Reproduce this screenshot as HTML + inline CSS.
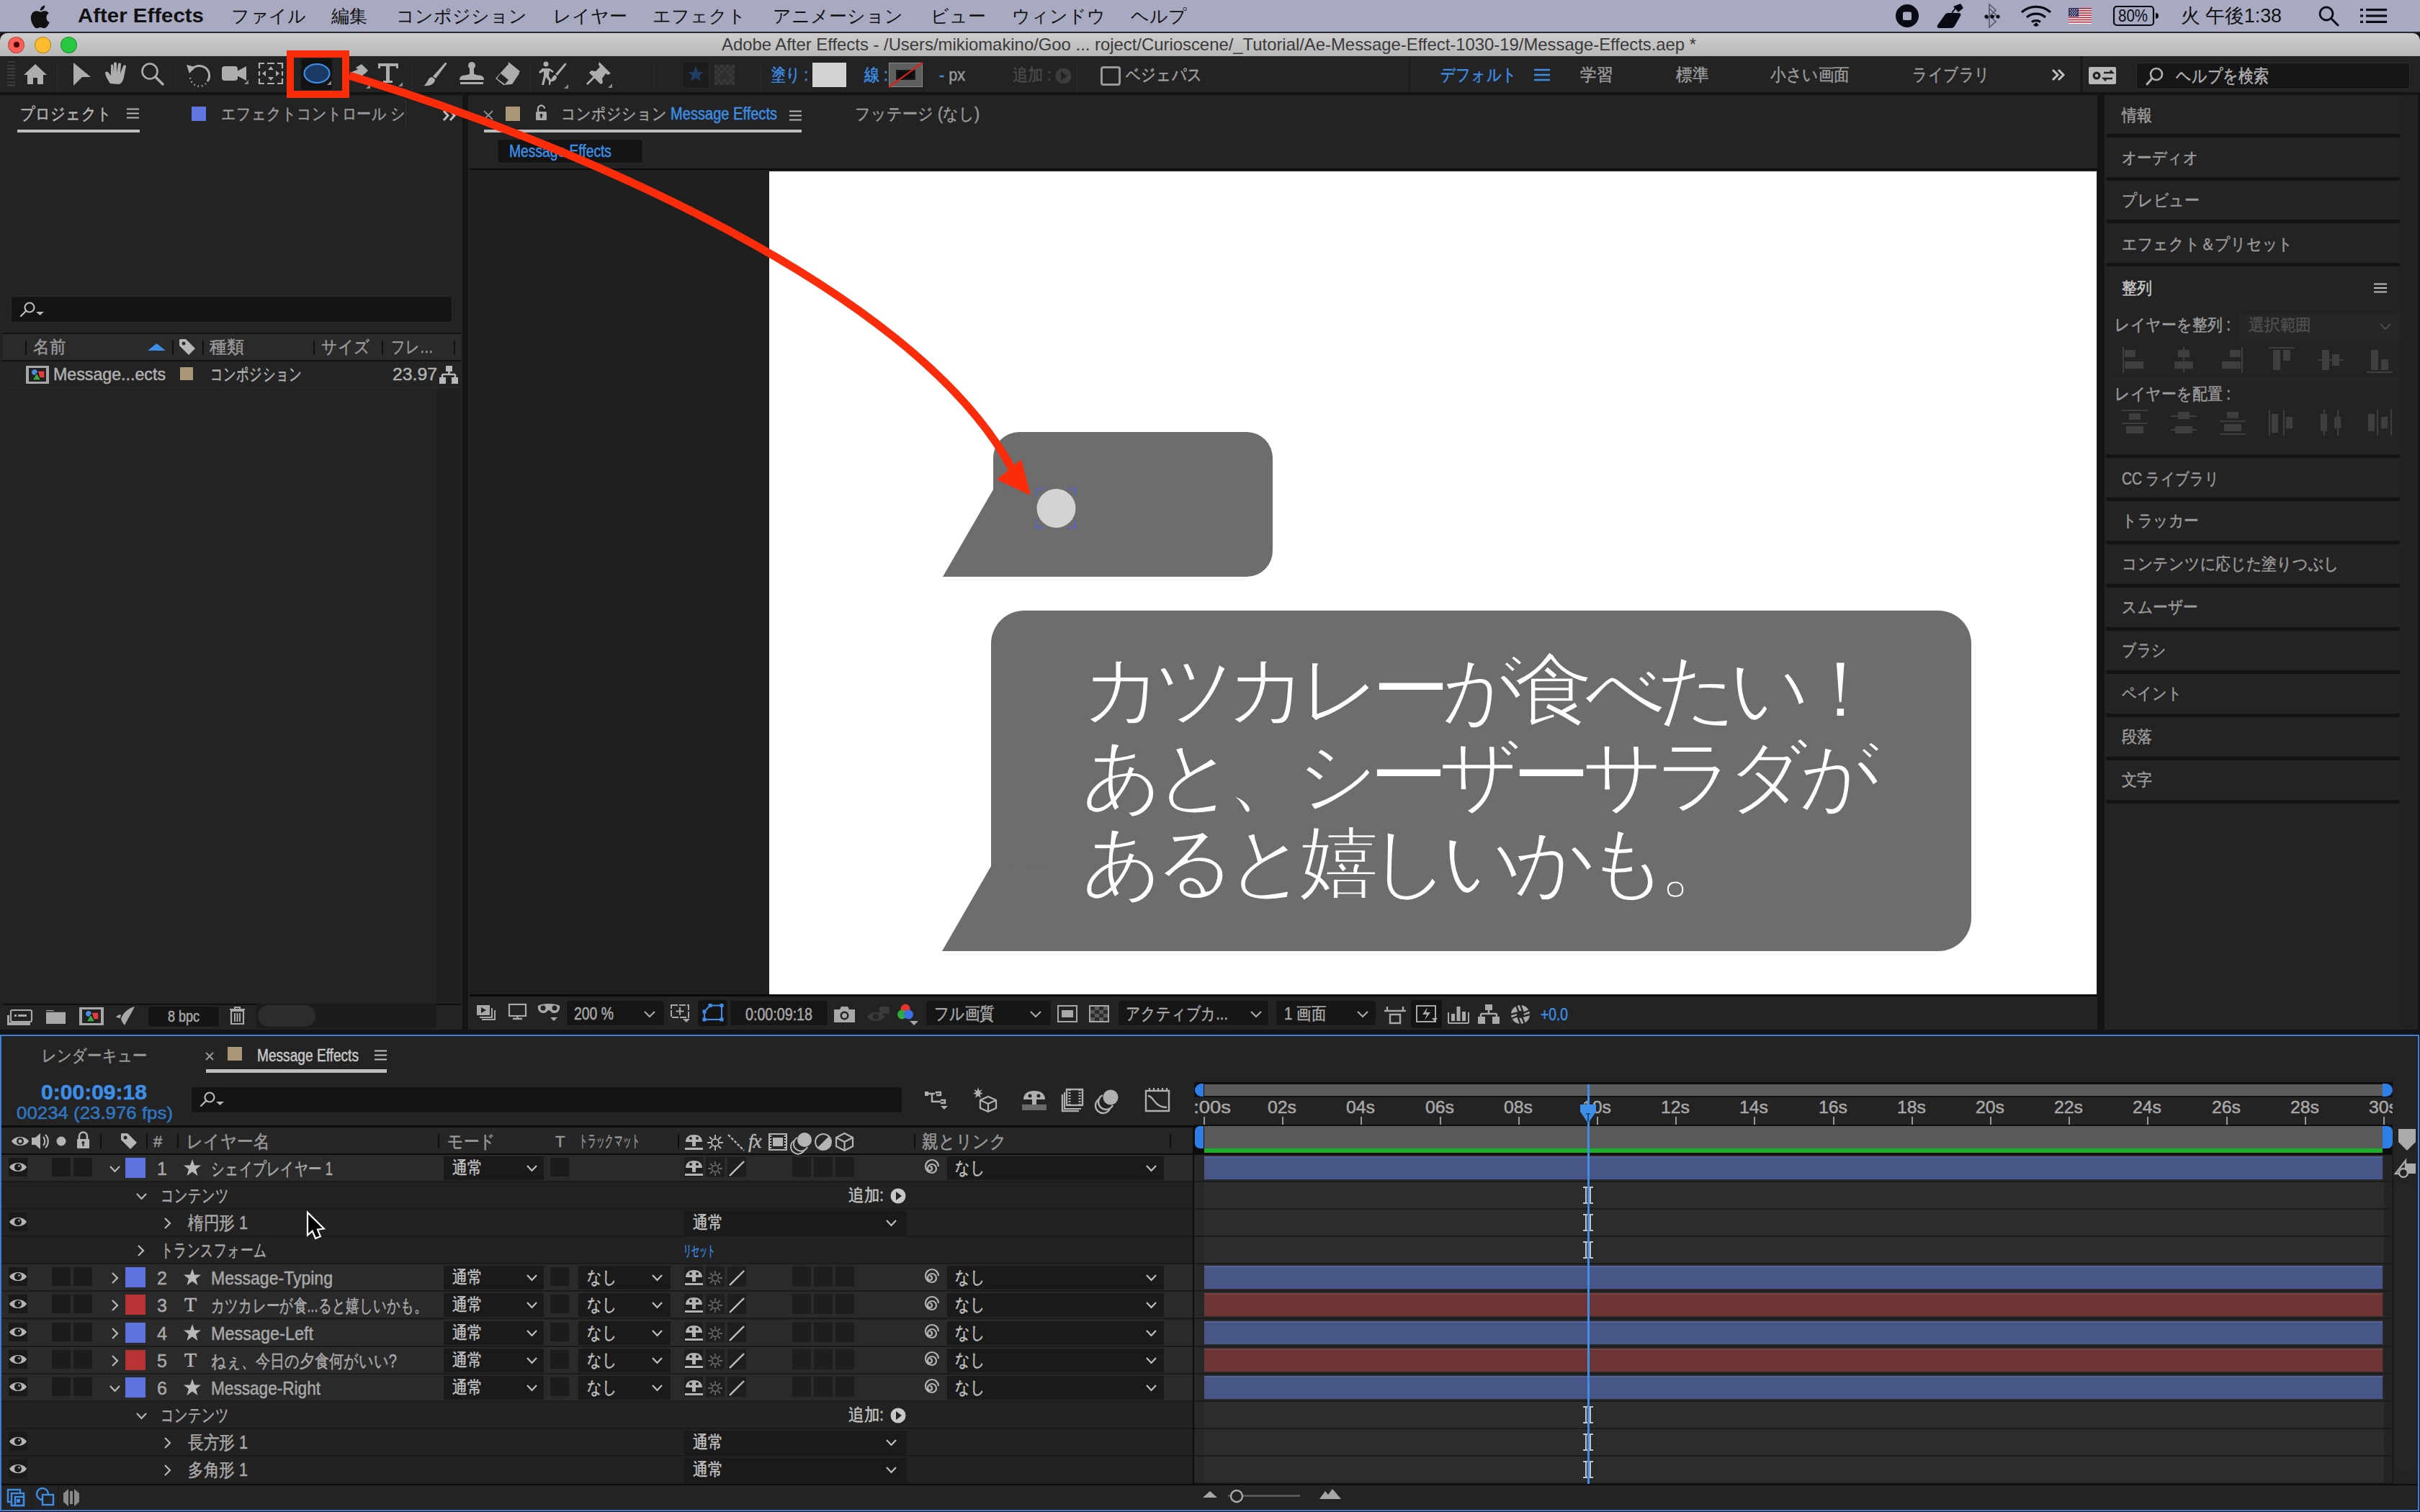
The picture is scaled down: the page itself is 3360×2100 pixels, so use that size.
<!DOCTYPE html><html lang="ja"><head><meta charset="utf-8"><style>
*{margin:0;padding:0;box-sizing:border-box}
html,body{width:3360px;height:2100px;overflow:hidden;background:#141414}
body{position:relative;font-family:"Liberation Sans",sans-serif;color:#a8a8a8}
div{position:absolute}
.t{line-height:40px;height:40px;white-space:nowrap;font-size:24px}
svg{position:absolute;overflow:visible}
.t{font-feature-settings:"palt";-webkit-text-stroke:0.5px currentColor}

.mb{font-size:25px;color:#111;line-height:44px;height:44px;top:0}
.tab{font-size:23px;color:#a0a0a0}
.blue{color:#3d8ee6}
.rp{font-size:23px;color:#9a9a9a}
</style></head><body><div style="left:0px;top:0px;width:3360px;height:44px;background:#a8aac2"></div>
<div style="left:0px;top:44px;width:3360px;height:2px;background:#2a2a2a"></div>
<svg style="left:40px;top:7px" width="30" height="32" viewBox="0 0 30 32"><path d="M24.5 17c0-4 3.3-5.6 3.4-5.7-1.9-2.700-4.800-3.100-5.800-3.100-2.500-.3-4.800 1.400-6.100 1.400s-3.200-1.400-5.200-1.300C8 8.300 5.500 9.900 4.200 12.300c-2.800 4.800-.7 12 2 15.900 1.300 1.900 2.900 4.100 5 4 2-.1 2.800-1.300 5.200-1.300s3.100 1.300 5.200 1.300 3.500-2 4.800-3.900c1.500-2.200 2.100-4.300 2.200-4.400-.1 0-4.100-1.600-4.100-6.200zM20.600 5.400C21.700 4.100 22.500 2.300 22.200.5c-1.600.1-3.500 1.100-4.700 2.400-1 1.200-1.900 3-1.700 4.700 1.800.1 3.600-.9 4.800-2.200z" fill="#111"/></svg>
<div class="mb" style="left:108px;font-weight:bold;font-size:28px;transform:scaleX(1.0511);transform-origin:0 50%">After Effects</div>
<div class="mb" style="left:321px">ファイル</div>
<div class="mb" style="left:460px">編集</div>
<div class="mb" style="left:550px">コンポジション</div>
<div class="mb" style="left:768px">レイヤー</div>
<div class="mb" style="left:906px">エフェクト</div>
<div class="mb" style="left:1073px">アニメーション</div>
<div class="mb" style="left:1292px">ビュー</div>
<div class="mb" style="left:1405px">ウィンドウ</div>
<div class="mb" style="left:1570px">ヘルプ</div>
<div class="mb" style="left:3028px;font-size:27px;transform:scaleX(0.9925);transform-origin:0 50%">火 午後1:38</div>
<div style="left:0px;top:46px;width:3360px;height:32px;background:linear-gradient(#cdcdcd,#b8b8b8);border-radius:10px 10px 0 0"></div>
<div style="left:11px;top:51px;width:23px;height:23px;background:#fc5f57;border-radius:50%;border:1px solid rgba(0,0,0,0.25)"></div>
<div style="left:48px;top:51px;width:23px;height:23px;background:#fdbb2e;border-radius:50%;border:1px solid rgba(0,0,0,0.25)"></div>
<div style="left:84px;top:51px;width:23px;height:23px;background:#27c840;border-radius:50%;border:1px solid rgba(0,0,0,0.25)"></div>
<div style="left:19px;top:58px;width:8px;height:8px;background:#4a0000;border-radius:50%"></div>
<div class="t" style="left:0;width:3360px;text-align:center;top:42px;font-size:24px;color:#3a3a3a;padding-left:0;-webkit-text-stroke:0"><div style="left:1002px;top:0;transform:scaleX(0.9941);transform-origin:0 50%">Adobe After Effects - /Users/mikiomakino/Goo ... roject/Curioscene/_Tutorial/Ae-Message-Effect-1030-19/Message-Effects.aep *</div></div>
<div style="left:0px;top:78px;width:3360px;height:50px;background:#232323"></div>
<div style="left:0px;top:128px;width:3360px;height:4px;background:#141414"></div>
<div style="left:10px;top:85.0px;width:11px;height:2.4px;background:#3a3a3a"></div>
<div style="left:10px;top:89.6px;width:11px;height:2.4px;background:#3a3a3a"></div>
<div style="left:10px;top:94.2px;width:11px;height:2.4px;background:#3a3a3a"></div>
<div style="left:10px;top:98.8px;width:11px;height:2.4px;background:#3a3a3a"></div>
<div style="left:10px;top:103.4px;width:11px;height:2.4px;background:#3a3a3a"></div>
<div style="left:10px;top:108.0px;width:11px;height:2.4px;background:#3a3a3a"></div>
<div style="left:10px;top:112.6px;width:11px;height:2.4px;background:#3a3a3a"></div>
<div style="left:10px;top:117.19999999999999px;width:11px;height:2.4px;background:#3a3a3a"></div>
<div style="left:79px;top:84px;width:1px;height:42px;background:#2b2b2b"></div>
<svg style="left:32px;top:88px;" width="34" height="30" viewBox="0 0 34 30"><path d="M17 1 L33 16 L28 16 L28 29 L20 29 L20 20 L14 20 L14 29 L6 29 L6 16 L1 16 Z" fill="#adadad"/></svg>
<svg style="left:101px;top:86px;" width="26" height="34" viewBox="0 0 26 34"><path d="M1 1 L25 21 L13 21 L1 33 Z" fill="#adadad"/></svg>
<svg style="left:145px;top:86px;" width="34" height="32" viewBox="0 0 34 32"><path d="M8 30 C4 24 1 18 1 15 C2 13 4 13 6 15 L9 19 L9 5 C9 3 12 3 12 5 L12 15 L13 2 C13 0 17 0 17 2 L17 15 L19 3 C19 1 23 1 23 3 L22 16 L26 6 C26 4 30 4 30 6 L27 21 C26 26 24 30 20 31 Z" fill="#adadad"/></svg>
<svg style="left:195px;top:86px;" width="34" height="34" viewBox="0 0 34 34"><circle cx="13" cy="13" r="10.5" fill="none" stroke="#adadad" stroke-width="2.6"/><path d="M21 21 L31 31" stroke="#adadad" stroke-width="3.5" stroke-linecap="round"/></svg>
<div style="left:244px;top:84px;width:1px;height:42px;background:#2b2b2b"></div>
<svg style="left:258px;top:86px;" width="36" height="36" viewBox="0 0 36 36"><path d="M8 11 A13 13 0 1 1 30 27" fill="none" stroke="#adadad" stroke-width="3"/><path d="M1 4 L13 7 L5 16 Z" fill="#adadad"/><path d="M6 22 A13 13 0 0 0 28 30" fill="none" stroke="#adadad" stroke-width="2.5" stroke-dasharray="1.5 4"/></svg>
<svg style="left:307px;top:89px;" width="38" height="28" viewBox="0 0 38 28"><rect x="1" y="3" width="22" height="20" rx="4" fill="#adadad"/><path d="M22 10 L35 3 L35 23 L22 16 Z" fill="#adadad"/><path d="M38 28 L38 22 L32 28Z" fill="#8a8a8a"/></svg>
<svg style="left:359px;top:87px;" width="34" height="30" viewBox="0 0 34 30"><path d="M1 8 V1 H8 M12 1 H22 M26 1 H33 V8 M33 12 V18 M33 22 V29 H26 M22 29 H12 M8 29 H1 V22 M1 18 V12" fill="none" stroke="#adadad" stroke-width="2.2"/><path d="M17 5 L21 10 L13 10Z M17 25 L21 20 L13 20Z M5 15 L10 11 L10 19Z M29 15 L24 11 L24 19Z" fill="#adadad"/></svg>
<div style="left:418px;top:81px;width:43px;height:44px;background:#131313;border-radius:4px"></div>
<svg style="left:420px;top:88px;" width="40" height="32" viewBox="0 0 40 32"><ellipse cx="20" cy="14" rx="17.5" ry="13" fill="#1b3a66" stroke="#3d8ee6" stroke-width="2.2"/><path d="M40 30 L40 24 L34 30Z" fill="#8a8a8a"/></svg>
<svg style="left:476px;top:87px;" width="36" height="36" viewBox="0 0 36 36"><path d="M20 3 L28 -2 L37 7 L32 12 Z" fill="#adadad" transform="translate(-2,4)"/><path d="M10 14 L24 8 L30 14 L22 28 Z" fill="#adadad"/><path d="M38 36 L38 30 L32 36Z" fill="#8a8a8a"/></svg>
<svg style="left:524px;top:87px;" width="34" height="34" viewBox="0 0 34 34"><path d="M1 1 H29 V8 H26 V5 H17 V25 H21 V28 H8 V25 H12 V5 H4 V8 H1 Z" fill="#adadad"/><path d="M35 33 L35 27 L29 33Z" fill="#8a8a8a"/></svg>
<div style="left:572px;top:84px;width:1px;height:42px;background:#2b2b2b"></div>
<svg style="left:587px;top:85px;" width="34" height="36" viewBox="0 0 34 36"><path d="M31 2 C32 1 34 3 33 4 L18 24 L14 21 Z" fill="#adadad"/><path d="M13 22 L17 25 C17 31 11 35 1 34 C5 32 6 28 8 25 C9 23 11 22 13 22Z" fill="#adadad"/></svg>
<svg style="left:637px;top:85px;" width="36" height="34" viewBox="0 0 36 34"><circle cx="18" cy="6" r="5" fill="#adadad"/><path d="M15 9 H21 L21 17 C21 19 27 19 31 20 C34 21 35 23 35 26 H1 C1 23 2 21 5 20 C9 19 15 19 15 17Z" fill="#adadad"/><rect x="2" y="29" width="32" height="3" fill="#adadad"/></svg>
<svg style="left:687px;top:85px;" width="36" height="36" viewBox="0 0 36 36"><path d="M19 1 L35 14 L22 31 L16 31 Z" fill="#adadad"/><path d="M18 5 L34 17 L24 32 L12 33 L1 24 Z" fill="#adadad"/><path d="M8 17 L19 26 L14 32 L3 24Z" fill="#232323"/><path d="M9 20 L17 26 L13 30 L5 24Z" fill="none"/></svg>
<svg style="left:747px;top:85px;" width="42" height="38" viewBox="0 0 42 38"><circle cx="11" cy="4" r="3.5" fill="#adadad"/><path d="M6 10 L16 10 L22 14 L20 16 L16 13 L15 21 L18 26 L17 33 L15 33 L15 27 L11 22 L8 33 L5 33 L8 20 L8 14 L3 17 L1 15Z" fill="#adadad"/><path d="M37 3 C39 2 40 4 39 5 L27 20 L24 18Z" fill="#adadad"/><path d="M23 19 L26 21 C26 26 22 29 15 28 C19 26 19 22 23 19Z" fill="#adadad"/><path d="M42 38 L42 32 L36 38Z" fill="#8a8a8a"/></svg>
<div style="left:736px;top:84px;width:1px;height:42px;background:#2b2b2b"></div>
<svg style="left:813px;top:85px;" width="36" height="38" viewBox="0 0 36 38"><path d="M19 1 L35 17 L31 19 L28 17 L23 24 L24 30 L21 32 L5 16 L8 13 L14 14 L20 8 L18 5 Z" fill="#adadad"/><path d="M11 21 L1 31 L3 33 L13 23Z" fill="#adadad"/><path d="M37 37 L37 31 L31 37Z" fill="#8a8a8a"/></svg>
<div style="left:907px;top:84px;width:1px;height:42px;background:#2b2b2b"></div>
<div style="left:947px;top:85px;width:38px;height:38px;background:#1c1c1c;border:1px solid #2a2a2a;border-radius:3px"></div>
<svg style="left:954px;top:91px;" width="24" height="24" viewBox="0 0 24 24"><path d="M12 1 L15 9 L23 9 L17 14 L19 22 L12 17 L5 22 L7 14 L1 9 L9 9Z" fill="#1f3d63"/></svg>
<svg style="left:991px;top:89px;" width="30" height="30" viewBox="0 0 30 30"><rect x="1" y="1" width="28" height="28" fill="#2e2e2e"/><path d="M1 1h4v4h-4zM9 1h4v4h-4zM17 1h4v4h-4zM25 1h4v4h-4zM5 5h4v4h-4zM13 5h4v4h-4zM21 5h4v4h-4zM1 9h4v4h-4zM9 9h4v4h-4zM17 9h4v4h-4zM25 9h4v4h-4zM5 13h4v4h-4zM21 13h4v4h-4zM1 17h4v4h-4zM25 17h4v4h-4zM5 21h4v4h-4zM13 21h4v4h-4zM21 21h4v4h-4zM1 25h4v4h-4zM9 25h4v4h-4zM17 25h4v4h-4zM25 25h4v4h-4z" fill="#383838"/></svg>
<div style="left:1056px;top:84px;width:1px;height:42px;background:#2b2b2b"></div>
<div class="t blue" style="left:1071px;top:84px;font-size:24px;transform:scaleX(0.8180);transform-origin:0 50%">塗り :</div>
<div style="left:1128px;top:87px;width:47px;height:34px;background:#d3d3d3"></div>
<div class="t blue" style="left:1200px;top:84px;font-size:24px;transform:scaleX(0.8837);transform-origin:0 50%">線 :</div>
<div style="left:1234px;top:87px;width:47px;height:34px;background:#5f5f5f;border:1px solid #8a8a8a"></div>
<div style="left:1244px;top:97px;width:27px;height:14px;background:#0e0e0e;border:2px solid #1a1a1a"></div>
<svg style="left:1234px;top:87px;" width="47" height="34" viewBox="0 0 47 34"><path d="M0 34 L47 0" stroke="#e0211a" stroke-width="2.2"/></svg>
<div class="t blue" style="left:1304px;top:84px;font-size:24px;transform:scaleX(0.8996);transform-origin:0 50%">-<span style="color:#9a9a9a"> px</span></div>
<div class="t" style="left:1406px;top:84px;font-size:24px;color:#4a4a4a;transform:scaleX(0.8803);transform-origin:0 50%">追加 :</div>
<svg style="left:1465px;top:94px;" width="23" height="23" viewBox="0 0 23 23"><circle cx="11.5" cy="11.5" r="11" fill="#3c3c3c"/><path d="M8 5 L17 11.5 L8 18Z" fill="#232323"/></svg>
<div style="left:1495px;top:84px;width:1px;height:42px;background:#2b2b2b"></div>
<div style="left:1528px;top:92px;width:28px;height:27px;border:3px solid #9a9a9a;border-radius:4px"></div>
<div class="t" style="left:1563px;top:84px;font-size:24px;color:#a0a0a0;transform:scaleX(0.8480);transform-origin:0 50%">ベジェパス</div>
<div style="left:1956px;top:82px;width:2px;height:46px;background:#1a1a1a"></div>
<div class="t blue" style="left:2000px;top:84px;font-size:24px;transform:scaleX(0.8480);transform-origin:0 50%">デフォルト</div>
<svg style="left:2130px;top:95px;" width="22" height="18" viewBox="0 0 22 18"><path d="M0 2H22M0 9H22M0 16H22" stroke="#3d8ee6" stroke-width="2.4"/></svg>
<div class="t" style="left:2194px;top:84px;font-size:24px;color:#9a9a9a;transform:scaleX(0.9375);transform-origin:0 50%">学習</div>
<div class="t" style="left:2327px;top:84px;font-size:24px;color:#9a9a9a;transform:scaleX(0.9375);transform-origin:0 50%">標準</div>
<div class="t" style="left:2458px;top:84px;font-size:24px;color:#9a9a9a;transform:scaleX(0.9016);transform-origin:0 50%">小さい画面</div>
<div class="t" style="left:2655px;top:84px;font-size:24px;color:#9a9a9a;transform:scaleX(0.8640);transform-origin:0 50%">ライブラリ</div>
<svg style="left:2848px;top:95px;" width="20" height="18" viewBox="0 0 20 18"><path d="M2 2 L9 9 L2 16 M10 2 L17 9 L10 16" fill="none" stroke="#c0c0c0" stroke-width="3"/></svg>
<div style="left:2888px;top:78px;width:4px;height:50px;background:#1a1a1a"></div>
<svg style="left:2900px;top:93px;" width="38" height="24" viewBox="0 0 38 24"><rect x="0" y="0" width="38" height="24" rx="2" fill="#b8b8b8"/><circle cx="11" cy="12" r="5.5" fill="#232323"/><circle cx="11" cy="12" r="2.2" fill="#b8b8b8"/><path d="M21 8 H33 L30 5 M33 16 H21 L24 19" fill="none" stroke="#232323" stroke-width="2.6"/></svg>
<div style="left:2966px;top:87px;width:380px;height:37px;background:#161616;border:1px solid #2c2c2c;border-radius:4px"></div>
<svg style="left:2979px;top:93px;" width="26" height="26" viewBox="0 0 26 26"><circle cx="15" cy="10" r="8" fill="none" stroke="#b0b0b0" stroke-width="2.6"/><path d="M9 16 L2 24" stroke="#b0b0b0" stroke-width="3" stroke-linecap="round"/></svg>
<div class="t" style="left:3021px;top:85px;font-size:25px;color:#b0b0b0;transform:scaleX(0.8377);transform-origin:0 50%">ヘルプを検索</div>
<div style="left:0px;top:132px;width:642px;height:1298px;background:#232323"></div>
<div style="left:650px;top:132px;width:2262px;height:1298px;background:#232323"></div>
<div style="left:2922px;top:132px;width:411px;height:1298px;background:#232323"></div>
<div style="left:3333px;top:132px;width:24px;height:1298px;background:#212121"></div>
<div class="t tab" style="left:28px;top:138px;color:#b4b4b4;transform:scaleX(0.8819);transform-origin:0 50%">プロジェクト</div>
<svg style="left:176px;top:150px;" width="17" height="15" viewBox="0 0 17 15"><path d="M0 1.5H17M0 7.5H17M0 13.5H17" stroke="#b4b4b4" stroke-width="2.2"/></svg>
<div style="left:24px;top:180px;width:170px;height:4px;background:#bdbdbd"></div>
<div style="left:266px;top:148px;width:20px;height:20px;background:#5f76e0"></div>
<div class="t tab" style="left:307px;top:138px;color:#999;transform:scaleX(0.8726);transform-origin:0 50%">エフェクトコントロール シ</div>
<div style="left:563px;top:140px;width:1px;height:36px;background:#333"></div>
<svg style="left:614px;top:153px;" width="20" height="15" viewBox="0 0 20 15"><path d="M2 1 L8 7.5 L2 14 M11 1 L17 7.5 L11 14" fill="none" stroke="#c0c0c0" stroke-width="3"/></svg>
<div style="left:15px;top:411px;width:613px;height:37px;background:#141414;border:1px solid #2a2a2a;border-radius:4px"></div>
<svg style="left:28px;top:419px;" width="36" height="24" viewBox="0 0 36 24"><circle cx="13" cy="8" r="6.5" fill="none" stroke="#b8b8b8" stroke-width="2.2"/><path d="M8.5 12.5 L1 20" stroke="#b8b8b8" stroke-width="2.4" stroke-linecap="round"/><path d="M22 14 H33 L27.5 19Z" fill="#b8b8b8"/></svg>
<div style="left:4px;top:462px;width:636px;height:2px;background:#111"></div>
<div style="left:4px;top:464px;width:636px;height:36px;background:#2a2a2a"></div>
<div style="left:4px;top:500px;width:636px;height:2px;background:#111"></div>
<div style="left:35px;top:473px;width:2px;height:20px;background:#111"></div>
<div style="left:239px;top:473px;width:2px;height:20px;background:#111"></div>
<div style="left:281px;top:473px;width:2px;height:20px;background:#111"></div>
<div style="left:435px;top:473px;width:2px;height:20px;background:#111"></div>
<div style="left:530px;top:473px;width:2px;height:20px;background:#111"></div>
<div style="left:630px;top:473px;width:2px;height:20px;background:#111"></div>
<div class="t" style="left:46px;top:462px;font-size:24px;color:#999;transform:scaleX(0.9375);transform-origin:0 50%">名前</div>
<svg style="left:205px;top:477px;" width="25" height="10" viewBox="0 0 25 10"><path d="M0 10 L12.5 0 L25 10Z" fill="#3d8ee6"/></svg>
<svg style="left:248px;top:470px;" width="25" height="24" viewBox="0 0 25 24"><path d="M1 2 L1 10 L14 23 L23 14 L10 1 L2 1Z" fill="#b8b8b8"/><circle cx="7" cy="7" r="2.5" fill="#2a2a2a"/></svg>
<div class="t" style="left:291px;top:462px;font-size:24px;color:#999;transform:scaleX(1.0000);transform-origin:0 50%">種類</div>
<div class="t" style="left:446px;top:462px;font-size:24px;color:#999;transform:scaleX(0.9067);transform-origin:0 50%">サイズ</div>
<div class="t" style="left:543px;top:462px;font-size:24px;color:#999;transform:scaleX(0.7973);transform-origin:0 50%">フレ…</div>
<div style="left:4px;top:538px;width:636px;height:1px;background:#2b2b2b"></div>
<svg style="left:36px;top:508px;" width="32" height="25" viewBox="0 0 32 25"><rect x="0" y="0" width="32" height="25" fill="#a8a8a8"/><rect x="4" y="3" width="24" height="19" fill="#222"/><circle cx="12" cy="9" r="4.5" fill="#4a8fe0" stroke="#111"/><path d="M9 20 L15 10 L21 20Z" fill="#3aa648" stroke="#111"/><path d="M16 7 H26 V17 H19Z" fill="#e23b3b" stroke="#111"/></svg>
<div class="t" style="left:74px;top:500px;font-size:24px;color:#b0b0b0;transform:scaleX(0.9665);transform-origin:0 50%">Message...ects</div>
<div style="left:250px;top:510px;width:18px;height:18px;background:#a89676"></div>
<div class="t" style="left:292px;top:500px;font-size:24px;color:#b0b0b0;transform:scaleX(0.7257);transform-origin:0 50%">コンポジション</div>
<div class="t" style="left:545px;top:500px;font-size:24px;color:#b0b0b0;transform:scaleX(1.0323);transform-origin:0 50%">23.97</div>
<svg style="left:610px;top:508px;" width="26" height="25" viewBox="0 0 26 25"><rect x="9" y="0" width="9" height="8" fill="#b8b8b8"/><path d="M13.5 8 V12 M4 12 H22 M4 12 V16 M22 12 V16" stroke="#b8b8b8" stroke-width="2.5" fill="none"/><rect x="0" y="16" width="9" height="9" fill="#b8b8b8"/><rect x="17" y="16" width="9" height="9" fill="#b8b8b8"/></svg>
<div style="left:606px;top:539px;width:34px;height:855px;background:#202020"></div>
<div style="left:4px;top:1394px;width:636px;height:2px;background:#0f0f0f"></div>
<div style="left:356px;top:1394px;width:250px;height:34px;background:#1c1c1c"></div>
<svg style="left:10px;top:1401px;" width="34" height="23" viewBox="0 0 34 23"><path d="M0 9 H3 V23 H0Z M0 9 H9 M7 9 V23" fill="#a8a8a8"/><rect x="5" y="2" width="29" height="16" rx="2" fill="none" stroke="#a8a8a8" stroke-width="2.2"/><rect x="10" y="8" width="3" height="3" fill="#a8a8a8"/><rect x="15" y="8" width="12" height="3" fill="#a8a8a8"/><rect x="3" y="19" width="29" height="4" fill="#a8a8a8"/></svg>
<svg style="left:64px;top:1400px;" width="27" height="23" viewBox="0 0 27 23"><path d="M0 3 H10 L12 5 H27 V22 H0Z" fill="#a8a8a8"/><path d="M0 5 H27" stroke="#232323" stroke-width="1.5"/></svg>
<svg style="left:110px;top:1399px;" width="34" height="25" viewBox="0 0 34 25"><rect x="0" y="0" width="34" height="25" fill="#a8a8a8"/><rect x="4" y="3" width="26" height="19" fill="#232323"/><circle cx="13" cy="9" r="4.5" fill="#4a8fe0" stroke="#111"/><path d="M10 20 L16 10 L22 20Z" fill="#3aa648" stroke="#111"/><path d="M17 7 H27 V17 H20Z" fill="#e23b3b" stroke="#111"/></svg>
<svg style="left:161px;top:1398px;" width="27" height="26" viewBox="0 0 27 26"><path d="M26 0 C18 2 10 8 7 17 C8 21 10 24 12 26 C16 18 21 10 26 0Z M7 11 C4 11 1 13 0 15 L6 16Z" fill="#a8a8a8"/></svg>
<div style="left:205px;top:1397px;width:100px;height:30px;background:#151515;border:1px solid #2a2a2a;border-radius:4px"></div>
<div class="t" style="left:233px;top:1392px;font-size:22px;color:#a8a8a8;transform:scaleX(0.8174);transform-origin:0 50%">8 bpc</div>
<svg style="left:319px;top:1398px;" width="21" height="25" viewBox="0 0 21 25"><path d="M0 4 H21 M7 4 V1 H14 V4" fill="none" stroke="#a8a8a8" stroke-width="2"/><path d="M2 6 H19 V24 H2Z" fill="none" stroke="#a8a8a8" stroke-width="2.2"/><path d="M7 9 V21 M10.5 9 V21 M14 9 V21" stroke="#a8a8a8" stroke-width="2"/></svg>
<div style="left:358px;top:1396px;width:80px;height:30px;background:#2c2c2c;border-radius:15px"></div>
<svg style="left:671px;top:153px;" width="14" height="14" viewBox="0 0 14 14"><path d="M1 1 L13 13 M13 1 L1 13" stroke="#8a8a8a" stroke-width="2"/></svg>
<div style="left:702px;top:148px;width:20px;height:20px;background:#a89676"></div>
<svg style="left:743px;top:145px;" width="17" height="23" viewBox="0 0 17 23"><path d="M4 10 V6 A4.5 4.5 0 0 1 13 6" fill="none" stroke="#a8a8a8" stroke-width="2.4"/><rect x="1" y="10" width="15" height="12" rx="1.5" fill="#a8a8a8"/><circle cx="8.5" cy="15" r="2" fill="#232323"/><rect x="7.5" y="15" width="2" height="4" fill="#232323"/></svg>
<div class="t tab" style="left:779px;top:138px;transform:scaleX(0.8721);transform-origin:0 50%">コンポジション <span class="blue">Message Effects</span></div>
<svg style="left:1096px;top:153px;" width="17" height="15" viewBox="0 0 17 15"><path d="M0 1.5H17M0 7.5H17M0 13.5H17" stroke="#b4b4b4" stroke-width="2.2"/></svg>
<div style="left:672px;top:180px;width:441px;height:4px;background:#bdbdbd"></div>
<div class="t tab" style="left:1187px;top:138px;color:#999;transform:scaleX(0.9167);transform-origin:0 50%">フッテージ (なし)</div>
<div style="left:690px;top:193px;width:203px;height:34px;background:#141414;border:1px solid #2a2a2a;border-radius:4px"></div>
<div class="t blue" style="left:707px;top:190px;font-size:23px;transform:scaleX(0.8372);transform-origin:0 50%">Message Effects</div>
<div style="left:652px;top:234px;width:2260px;height:2px;background:#0a0a0a"></div>
<div style="left:652px;top:236px;width:2260px;height:1145px;background:#1f1f1f"></div>
<div style="left:1068px;top:238px;width:1843px;height:1143px;background:#ffffff"></div>
<div style="left:652px;top:1381px;width:2260px;height:3px;background:#0a0a0a"></div>
<svg style="left:662px;top:1396px;" width="27" height="21" viewBox="0 0 27 21"><rect x="0" y="0" width="18" height="14" fill="#a8a8a8"/><path d="M6 3 L13 7 L6 11Z" fill="#232323"/><path d="M21 4 V17 H4 M25 7 V20 H7" fill="none" stroke="#a8a8a8" stroke-width="2"/></svg>
<svg style="left:706px;top:1394px;" width="25" height="22" viewBox="0 0 25 22"><rect x="1" y="1" width="23" height="16" fill="none" stroke="#a8a8a8" stroke-width="2.2"/><path d="M12.5 17 V20 M6 21 H19" stroke="#a8a8a8" stroke-width="2.5"/></svg>
<svg style="left:745px;top:1393px;" width="34" height="30" viewBox="0 0 34 30"><path d="M2 4 C8 0 26 0 32 4 C33 9 30 14 24 14 C20 14 19 10 17 10 C15 10 14 14 10 14 C4 14 1 9 2 4Z" fill="#a8a8a8"/><circle cx="9" cy="7" r="3.5" fill="#232323"/><circle cx="25" cy="7" r="3.5" fill="#232323"/><path d="M19 20 H29 L24 25Z" fill="#a8a8a8"/></svg>
<div style="left:786px;top:1389px;width:137px;height:36px;background:#161616;border:1px solid #262626;border-radius:4px"></div>
<div class="t" style="left:797px;top:1388px;font-size:23px;color:#a8a8a8;transform:scaleX(0.8433);transform-origin:0 50%">200 %</div>
<svg style="left:894px;top:1404px;" width="16" height="10" viewBox="0 0 16 10"><path d="M1 1 L8 8 L15 1" fill="none" stroke="#a8a8a8" stroke-width="2.2"/></svg>
<svg style="left:929px;top:1393px;" width="32" height="30" viewBox="0 0 32 30"><rect x="3" y="3" width="24" height="17" fill="none" stroke="#a8a8a8" stroke-width="2" stroke-dasharray="9 2"/><path d="M15 6 V17 M9.5 11.5 H20.5" stroke="#a8a8a8" stroke-width="2"/><path d="M19 22 H29 L24 27Z" fill="#a8a8a8"/></svg>
<div style="left:969px;top:1389px;width:41px;height:36px;background:#141414;border-radius:4px"></div>
<svg style="left:975px;top:1394px;" width="30" height="25" viewBox="0 0 30 25"><path d="M11 2.5 H27 V22 H3 V11Z" fill="none" stroke="#3d8ee6" stroke-width="2"/><rect x="8.5" y="0" width="5" height="5" fill="#3d8ee6"/><rect x="24.5" y="0" width="5" height="5" fill="#3d8ee6"/><rect x="0.5" y="8.5" width="5" height="5" fill="#3d8ee6"/><rect x="0.5" y="19.5" width="5" height="5" fill="#3d8ee6"/><rect x="24.5" y="19.5" width="5" height="5" fill="#3d8ee6"/></svg>
<div style="left:1013px;top:1389px;width:137px;height:36px;background:#161616;border:1px solid #262626;border-radius:4px"></div>
<div class="t" style="left:1035px;top:1389px;font-size:23px;color:#a8a8a8;transform:scaleX(0.8554);transform-origin:0 50%">0:00:09:18</div>
<svg style="left:1158px;top:1397px;" width="29" height="23" viewBox="0 0 29 23"><path d="M0 5 H8 L10 1 H19 L21 5 H29 V23 H0Z" fill="#a8a8a8"/><circle cx="14.5" cy="13.5" r="6" fill="#232323"/><circle cx="14.5" cy="13.5" r="3.5" fill="#a8a8a8"/></svg>
<svg style="left:1203px;top:1396px;" width="32" height="26" viewBox="0 0 32 26"><path d="M1 16 C6 8 20 8 26 16 C20 24 6 24 1 16Z" fill="#3a3a3a"/><circle cx="13" cy="16" r="4" fill="#232323"/><rect x="18" y="2" width="14" height="10" rx="2" fill="#3a3a3a"/></svg>
<svg style="left:1247px;top:1393px;" width="32" height="36" viewBox="0 0 32 36"><circle cx="10" cy="8" r="6.5" fill="#e8322d"/><circle cx="5.5" cy="16" r="6.5" fill="#2faa3c"/><circle cx="14.5" cy="16" r="6.5" fill="#3c6ee8"/><path d="M16 25 H28 L22 31Z" fill="#a8a8a8"/></svg>
<div style="left:1285px;top:1389px;width:175px;height:36px;background:#161616;border:1px solid #262626;border-radius:4px"></div>
<div class="t" style="left:1297px;top:1388px;font-size:24px;color:#a8a8a8;transform:scaleX(0.8571);transform-origin:0 50%">フル画質</div>
<svg style="left:1430px;top:1404px;" width="16" height="10" viewBox="0 0 16 10"><path d="M1 1 L8 8 L15 1" fill="none" stroke="#a8a8a8" stroke-width="2.2"/></svg>
<svg style="left:1468px;top:1396px;" width="28" height="24" viewBox="0 0 28 24"><rect x="1" y="1" width="26" height="22" fill="none" stroke="#a8a8a8" stroke-width="2"/><rect x="6" y="7" width="16" height="10" fill="#a8a8a8"/></svg>
<svg style="left:1512px;top:1396px;" width="28" height="24" viewBox="0 0 28 24"><rect x="1" y="1" width="26" height="22" fill="#5a5a5a" stroke="#a8a8a8" stroke-width="2"/><path d="M2 2h6v5h-6zM14 2h6v5h-6zM8 7h6v5h-6zM20 7h6v5h-6zM2 12h6v5h-6zM14 12h6v5h-6zM8 17h6v5h-6zM20 17h6v5h-6z" fill="#2b2b2b"/></svg>
<div style="left:1552px;top:1389px;width:210px;height:36px;background:#161616;border:1px solid #262626;border-radius:4px"></div>
<div class="t" style="left:1563px;top:1388px;font-size:24px;color:#a8a8a8;transform:scaleX(0.8352);transform-origin:0 50%">アクティブカ...</div>
<svg style="left:1736px;top:1404px;" width="16" height="10" viewBox="0 0 16 10"><path d="M1 1 L8 8 L15 1" fill="none" stroke="#a8a8a8" stroke-width="2.2"/></svg>
<div style="left:1771px;top:1389px;width:140px;height:36px;background:#161616;border:1px solid #262626;border-radius:4px"></div>
<div class="t" style="left:1783px;top:1388px;font-size:24px;color:#a8a8a8;transform:scaleX(0.8527);transform-origin:0 50%">1 画面</div>
<svg style="left:1884px;top:1404px;" width="16" height="10" viewBox="0 0 16 10"><path d="M1 1 L8 8 L15 1" fill="none" stroke="#a8a8a8" stroke-width="2.2"/></svg>
<svg style="left:1921px;top:1396px;" width="32" height="28" viewBox="0 0 32 28"><path d="M1 8 H31 M5 8 V2 M27 8 V2 M9 13 H23 V25 H9Z" fill="none" stroke="#a8a8a8" stroke-width="2.4"/></svg>
<div style="left:1959px;top:1389px;width:43px;height:39px;background:#141414;border-radius:4px"></div>
<svg style="left:1966px;top:1396px;" width="30" height="26" viewBox="0 0 30 26"><rect x="1" y="1" width="26" height="22" fill="none" stroke="#a8a8a8" stroke-width="2"/><path d="M16 3 L9 13 H15 L12 21 L20 10 H14Z" fill="#a8a8a8"/><path d="M22 18 H30 L26 23Z" fill="#a8a8a8"/></svg>
<svg style="left:2010px;top:1396px;" width="30" height="26" viewBox="0 0 30 26"><path d="M1 25 H29 M1 10 V25 M29 10 V25" stroke="#a8a8a8" stroke-width="2" fill="none"/><rect x="5" y="12" width="5" height="10" fill="#a8a8a8"/><rect x="12.5" y="2" width="5" height="20" fill="#a8a8a8"/><rect x="20" y="9" width="5" height="13" fill="#a8a8a8"/></svg>
<svg style="left:2052px;top:1395px;" width="30" height="28" viewBox="0 0 30 28"><rect x="10" y="0" width="10" height="8" fill="#a8a8a8"/><path d="M15 8 V13 M4 13 H26 M4 13 V17 M26 13 V17" stroke="#a8a8a8" stroke-width="2.5" fill="none"/><rect x="0" y="17" width="10" height="10" fill="#a8a8a8"/><rect x="20" y="17" width="10" height="10" fill="#a8a8a8"/></svg>
<div style="left:2098px;top:1390px;width:1px;height:37px;background:#2e2e2e"></div>
<svg style="left:2096px;top:1394px;" width="30" height="30" viewBox="0 0 30 30"><circle cx="15" cy="15" r="13" fill="#a8a8a8"/><path d="M15 2 L19 13 L28 9 M28 15 L17 18 L21 28 M15 28 L11 17 L2 21 M2 15 L13 12 L9 2" fill="none" stroke="#232323" stroke-width="2.4"/><circle cx="15" cy="15" r="5" fill="#232323"/></svg>
<div class="t blue" style="left:2139px;top:1389px;font-size:23px;transform:scaleX(0.8369);transform-origin:0 50%">+0.0</div>
<div style="left:2912px;top:132px;width:10px;height:1298px;background:#141414"></div>
<div style="left:2924px;top:186px;width:408px;height:5px;background:#141414"></div>
<div style="left:2924px;top:246px;width:408px;height:5px;background:#141414"></div>
<div style="left:2924px;top:305px;width:408px;height:5px;background:#141414"></div>
<div style="left:2924px;top:365px;width:408px;height:5px;background:#141414"></div>
<div style="left:2924px;top:631px;width:408px;height:5px;background:#141414"></div>
<div style="left:2924px;top:691px;width:408px;height:5px;background:#141414"></div>
<div style="left:2924px;top:751px;width:408px;height:5px;background:#141414"></div>
<div style="left:2924px;top:811px;width:408px;height:5px;background:#141414"></div>
<div style="left:2924px;top:871px;width:408px;height:5px;background:#141414"></div>
<div style="left:2924px;top:931px;width:408px;height:5px;background:#141414"></div>
<div style="left:2924px;top:991px;width:408px;height:5px;background:#141414"></div>
<div style="left:2924px;top:1051px;width:408px;height:5px;background:#141414"></div>
<div style="left:2924px;top:1111px;width:408px;height:5px;background:#141414"></div>
<div class="t rp" style="left:2946px;top:140px;transform:scaleX(0.9130);transform-origin:0 50%">情報</div>
<div class="t rp" style="left:2946px;top:199px;transform:scaleX(0.8908);transform-origin:0 50%">オーディオ</div>
<div class="t rp" style="left:2946px;top:258px;transform:scaleX(0.9076);transform-origin:0 50%">プレビュー</div>
<div class="t rp" style="left:2946px;top:319px;transform:scaleX(0.9049);transform-origin:0 50%">エフェクト＆プリセット</div>
<div class="t rp" style="left:2946px;top:645px;transform:scaleX(0.8457);transform-origin:0 50%">CC ライブラリ</div>
<div class="t rp" style="left:2946px;top:703px;transform:scaleX(0.8992);transform-origin:0 50%">トラッカー</div>
<div class="t rp" style="left:2946px;top:763px;transform:scaleX(0.9042);transform-origin:0 50%">コンテンツに応じた塗りつぶし</div>
<div class="t rp" style="left:2946px;top:823px;transform:scaleX(0.8983);transform-origin:0 50%">スムーザー</div>
<div class="t rp" style="left:2946px;top:883px;transform:scaleX(0.8611);transform-origin:0 50%">ブラシ</div>
<div class="t rp" style="left:2946px;top:943px;transform:scaleX(0.8750);transform-origin:0 50%">ペイント</div>
<div class="t rp" style="left:2946px;top:1003px;transform:scaleX(0.9130);transform-origin:0 50%">段落</div>
<div class="t rp" style="left:2946px;top:1063px;transform:scaleX(0.9130);transform-origin:0 50%">文字</div>
<div class="t rp" style="left:2946px;top:380px;color:#c8c8c8;transform:scaleX(0.9130);transform-origin:0 50%">整列</div>
<svg style="left:3296px;top:393px;" width="18" height="14" viewBox="0 0 18 14"><path d="M0 1.5H18M0 7H18M0 12.5H18" stroke="#c0c0c0" stroke-width="2"/></svg>
<div class="t rp" style="left:2936px;top:431px;transform:scaleX(0.9056);transform-origin:0 50%">レイヤーを整列 :</div>
<div style="left:3108px;top:435px;width:224px;height:37px;background:#262626"></div>
<div class="t rp" style="left:3122px;top:431px;color:#4e4e4e;transform:scaleX(0.9457);transform-origin:0 50%">選択範囲</div>
<svg style="left:3304px;top:449px;" width="16" height="10" viewBox="0 0 16 10"><path d="M1 1 L8 8 L15 1" fill="none" stroke="#4a4a4a" stroke-width="2"/></svg>
<svg style="left:2946px;top:482px;" width="36" height="36" viewBox="0 0 36 36"><rect x="1" y="0" width="2" height="36" fill="#3e3e3e"/><rect x="4" y="4" width="15" height="10" fill="#3e3e3e"/><rect x="4" y="20" width="26" height="10" fill="#3e3e3e"/></svg>
<svg style="left:3014px;top:482px;" width="36" height="36" viewBox="0 0 36 36"><rect x="17" y="0" width="2" height="36" fill="#3e3e3e"/><rect x="10" y="4" width="16" height="10" fill="#3e3e3e"/><rect x="5" y="20" width="26" height="10" fill="#3e3e3e"/></svg>
<svg style="left:3082px;top:482px;" width="36" height="36" viewBox="0 0 36 36"><rect x="30" y="0" width="2" height="36" fill="#3e3e3e"/><rect x="14" y="4" width="15" height="10" fill="#3e3e3e"/><rect x="3" y="20" width="26" height="10" fill="#3e3e3e"/></svg>
<svg style="left:3150px;top:482px;" width="36" height="36" viewBox="0 0 36 36"><rect x="0" y="0" width="36" height="2" fill="#3e3e3e"/><rect x="6" y="4" width="10" height="28" fill="#3e3e3e"/><rect x="20" y="4" width="10" height="15" fill="#3e3e3e"/></svg>
<svg style="left:3218px;top:482px;" width="36" height="36" viewBox="0 0 36 36"><rect x="0" y="17" width="36" height="2" fill="#3e3e3e"/><rect x="6" y="4" width="10" height="28" fill="#3e3e3e"/><rect x="20" y="10" width="10" height="16" fill="#3e3e3e"/></svg>
<svg style="left:3286px;top:482px;" width="36" height="36" viewBox="0 0 36 36"><rect x="0" y="34" width="36" height="2" fill="#3e3e3e"/><rect x="6" y="4" width="10" height="28" fill="#3e3e3e"/><rect x="20" y="17" width="10" height="15" fill="#3e3e3e"/></svg>
<div style="left:2934px;top:526px;width:396px;height:2px;background:#262626"></div>
<div class="t rp" style="left:2936px;top:527px;transform:scaleX(0.9056);transform-origin:0 50%">レイヤーを配置 :</div>
<svg style="left:2946px;top:569px;" width="36" height="36" viewBox="0 0 36 36"><rect x="0" y="0" width="36" height="2" fill="#3e3e3e"/><rect x="0" y="18" width="36" height="2" fill="#3e3e3e"/><rect x="10" y="5" width="16" height="9" fill="#3e3e3e"/><rect x="6" y="23" width="24" height="10" fill="#3e3e3e"/></svg>
<svg style="left:3014px;top:569px;" width="36" height="36" viewBox="0 0 36 36"><rect x="0" y="8" width="36" height="2" fill="#3e3e3e"/><rect x="0" y="27" width="36" height="2" fill="#3e3e3e"/><rect x="10" y="3" width="16" height="10" fill="#3e3e3e"/><rect x="6" y="23" width="24" height="10" fill="#3e3e3e"/></svg>
<svg style="left:3082px;top:569px;" width="36" height="36" viewBox="0 0 36 36"><rect x="0" y="15" width="36" height="2" fill="#3e3e3e"/><rect x="0" y="33" width="36" height="2" fill="#3e3e3e"/><rect x="10" y="3" width="16" height="9" fill="#3e3e3e"/><rect x="6" y="20" width="24" height="10" fill="#3e3e3e"/></svg>
<svg style="left:3150px;top:569px;" width="36" height="36" viewBox="0 0 36 36"><rect x="0" y="0" width="2" height="36" fill="#3e3e3e"/><rect x="20" y="0" width="2" height="36" fill="#3e3e3e"/><rect x="4" y="6" width="9" height="26" fill="#3e3e3e"/><rect x="24" y="10" width="9" height="16" fill="#3e3e3e"/></svg>
<svg style="left:3218px;top:569px;" width="36" height="36" viewBox="0 0 36 36"><rect x="8" y="0" width="2" height="36" fill="#3e3e3e"/><rect x="27" y="0" width="2" height="36" fill="#3e3e3e"/><rect x="4" y="6" width="9" height="24" fill="#3e3e3e"/><rect x="23" y="10" width="9" height="16" fill="#3e3e3e"/></svg>
<svg style="left:3286px;top:569px;" width="36" height="36" viewBox="0 0 36 36"><rect x="14" y="0" width="2" height="36" fill="#3e3e3e"/><rect x="33" y="0" width="2" height="36" fill="#3e3e3e"/><rect x="2" y="6" width="9" height="24" fill="#3e3e3e"/><rect x="20" y="10" width="9" height="16" fill="#3e3e3e"/></svg>
<svg style="left:0;top:0" width="3360" height="2100" viewBox="0 0 3360 2100">
<rect x="1379" y="600" width="388" height="201" rx="36" fill="#6d6d6d"/>
<path d="M1379 680 L1309 801 L1450 801 L1450 690Z" fill="#6d6d6d"/>
<rect x="1376" y="848" width="1361" height="473" rx="46" fill="#6d6d6d"/>
<path d="M1376 1203 L1308 1321 L1460 1321 L1460 1200Z" fill="#6d6d6d"/>
<circle cx="1466.5" cy="706" r="27" fill="#d3d3d3"/>
<path d="M1439 689 V679 H1449 M1483 679 H1493 V689 M1493 723 V733 H1483 M1449 733 H1439 V723" fill="none" stroke="#5a67b0" stroke-width="2.5"/>
</svg>
<div style="left:1502px;top:897px;font-size:110px;letter-spacing:-12.5px;line-height:120px;color:#ffffff;white-space:nowrap;-webkit-text-stroke:2px #6d6d6d">カツカレーが食べたい！<br>あと、シーザーサラダが<br>あると嬉しいかも。</div>
<div style="left:0px;top:1437px;width:3359px;height:662px;background:#232323;border:2px solid #3b7fd8"></div>
<div class="t tab" style="left:58px;top:1446px;color:#999;transform:scaleX(0.8795);transform-origin:0 50%">レンダーキュー</div>
<svg style="left:285px;top:1461px;" width="12" height="12" viewBox="0 0 12 12"><path d="M1 1 L11 11 M11 1 L1 11" stroke="#999" stroke-width="2"/></svg>
<div style="left:316px;top:1454px;width:20px;height:19px;background:#a89676"></div>
<div class="t tab" style="left:357px;top:1446px;color:#c8c8c8;transform:scaleX(0.8313);transform-origin:0 50%">Message Effects</div>
<svg style="left:520px;top:1458px;" width="17" height="15" viewBox="0 0 17 15"><path d="M0 1.5H17M0 7.5H17M0 13.5H17" stroke="#c0c0c0" stroke-width="2.2"/></svg>
<div style="left:286px;top:1485px;width:251px;height:5px;background:#bdbdbd"></div>
<div class="t" style="left:57px;top:1497px;font-size:29px;font-weight:bold;color:#3d8ee6;transform:scaleX(1.0361);transform-origin:0 50%">0:00:09:18</div>
<div class="t" style="left:23px;top:1526px;font-size:24px;color:#2f78c4;transform:scaleX(1.0770);transform-origin:0 50%">00234 (23.976 fps)</div>
<div style="left:265px;top:1509px;width:988px;height:37px;background:#141414;border:1px solid #262626;border-radius:4px"></div>
<svg style="left:278px;top:1516px;" width="36" height="24" viewBox="0 0 36 24"><circle cx="13" cy="8" r="6.5" fill="none" stroke="#b8b8b8" stroke-width="2.2"/><path d="M8.5 12.5 L1 20" stroke="#b8b8b8" stroke-width="2.4" stroke-linecap="round"/><path d="M22 14 H33 L27.5 19Z" fill="#b8b8b8"/></svg>
<svg style="left:1284px;top:1512px;" width="36" height="32" viewBox="0 0 36 32"><path d="M1 7 H14 M10 7 V18 H22 M16 7 V5 H22 V9 H16 M22 16 H28 V20 H22" fill="none" stroke="#b0b0b0" stroke-width="2.4"/><rect x="0" y="4" width="5" height="6" fill="#b0b0b0"/><path d="M22 24 H32 L27 29Z" fill="#b0b0b0"/></svg>
<svg style="left:1350px;top:1510px;" width="36" height="34" viewBox="0 0 36 34"><path d="M8 0 L9.5 5 L14 3 L11 7 L15 9 L10.5 10 L12 15 L8 12 L4 15 L5.5 10 L1 9 L5 7 L2 3 L6.5 5Z" fill="#b0b0b0"/><path d="M22 13 L33 18 V29 L22 34 L11 29 V18Z M11 18 L22 23 L33 18 M22 23 V34" fill="none" stroke="#b0b0b0" stroke-width="2.3"/></svg>
<svg style="left:1419px;top:1514px;" width="34" height="28" viewBox="0 0 34 28"><path d="M2 13 C2 5 8 1 17 1 C26 1 32 5 32 13Z" fill="#b0b0b0"/><circle cx="11" cy="8" r="2.5" fill="#232323"/><circle cx="23" cy="8" r="2.5" fill="#232323"/><rect x="14" y="13" width="6" height="8" fill="#b0b0b0"/><rect x="0" y="20" width="34" height="8" fill="#6a6a6a"/></svg>
<svg style="left:1474px;top:1512px;" width="30" height="32" viewBox="0 0 30 32"><rect x="7" y="1" width="22" height="22" fill="none" stroke="#b0b0b0" stroke-width="2.4"/><path d="M1 8 V31 H24" fill="none" stroke="#b0b0b0" stroke-width="2.4"/><path d="M4 5 V28 H27" fill="none" stroke="#b0b0b0" stroke-width="2"/><path d="M11 1 V23 M25 1 V23" stroke="#b0b0b0" stroke-width="3" stroke-dasharray="2 2"/></svg>
<svg style="left:1522px;top:1512px;" width="32" height="32" viewBox="0 0 32 32"><circle cx="20" cy="12" r="10.5" fill="#b0b0b0"/><path d="M9 9 A10.5 10.5 0 1 0 23 23" fill="none" stroke="#b0b0b0" stroke-width="2.4"/><path d="M5 14 A10.5 10.5 0 1 0 19 28" fill="none" stroke="#b0b0b0" stroke-width="2.4"/></svg>
<svg style="left:1590px;top:1510px;" width="34" height="34" viewBox="0 0 34 34"><path d="M1 5 V33 H33 V5Z" fill="none" stroke="#b0b0b0" stroke-width="2.4"/><path d="M6 1 V5 M12 1 V5 M18 1 V5 M24 1 V5 M30 1 V5" stroke="#b0b0b0" stroke-width="2"/><path d="M4 12 C12 12 12 28 30 28" fill="none" stroke="#b0b0b0" stroke-width="2.4"/></svg>
<div style="left:2px;top:1563px;width:3355px;height:3px;background:#0c0c0c"></div>
<div style="left:2px;top:1566px;width:1654px;height:36px;background:#262626"></div>
<div style="left:2px;top:1602px;width:3355px;height:2px;background:#0c0c0c"></div>
<svg style="left:15px;top:1576px;" width="26" height="18" viewBox="0 0 26 18"><path d="M1 9 C6 1 20 1 25 9 C20 17 6 17 1 9Z" fill="#b4b4b4"/><circle cx="13" cy="9" r="5" fill="#262626"/><circle cx="13" cy="9" r="2.5" fill="#b4b4b4"/></svg>
<svg style="left:43px;top:1572px;" width="26" height="26" viewBox="0 0 26 26"><path d="M1 8 H6 L13 2 V24 L6 18 H1Z" fill="#b4b4b4"/><path d="M17 7 C20 10 20 16 17 19 M20 4 C25 9 25 17 20 22" fill="none" stroke="#b4b4b4" stroke-width="2.2"/></svg>
<svg style="left:78px;top:1578px;" width="14" height="14" viewBox="0 0 14 14"><circle cx="7" cy="7" r="6.5" fill="#b4b4b4"/></svg>
<svg style="left:106px;top:1571px;" width="19" height="25" viewBox="0 0 19 25"><path d="M4 11 V7 A5.5 5.5 0 0 1 15 7 V11" fill="none" stroke="#b4b4b4" stroke-width="2.6"/><rect x="1" y="11" width="17" height="13" rx="1" fill="#b4b4b4"/><circle cx="9.5" cy="16" r="2" fill="#262626"/><rect x="8.5" y="16" width="2" height="5" fill="#262626"/></svg>
<div style="left:139px;top:1575px;width:2px;height:20px;background:#101010"></div>
<div style="left:203px;top:1575px;width:2px;height:20px;background:#101010"></div>
<div style="left:246px;top:1575px;width:2px;height:20px;background:#101010"></div>
<div style="left:608px;top:1575px;width:2px;height:20px;background:#101010"></div>
<div style="left:941px;top:1575px;width:2px;height:20px;background:#101010"></div>
<div style="left:1269px;top:1575px;width:2px;height:20px;background:#101010"></div>
<div style="left:1624px;top:1575px;width:2px;height:20px;background:#101010"></div>
<svg style="left:167px;top:1573px;" width="24" height="24" viewBox="0 0 24 24"><path d="M1 2 L1 10 L14 23 L23 14 L10 1 L2 1Z" fill="#b4b4b4"/><circle cx="7" cy="7" r="2.5" fill="#262626"/></svg>
<div class="t" style="left:213px;top:1566px;font-size:22px;color:#999">#</div>
<div class="t" style="left:259px;top:1565px;font-size:25px;color:#999;transform:scaleX(0.8984);transform-origin:0 50%">レイヤー名</div>
<div class="t" style="left:621px;top:1565px;font-size:25px;color:#999;transform:scaleX(0.8701);transform-origin:0 50%">モード</div>
<div class="t" style="left:771px;top:1566px;font-size:22px;color:#999">T</div>
<div class="t" style="left:804px;top:1565px;font-size:22px;color:#999;transform:scaleX(0.5280);transform-origin:0 50%">トラックマット</div>
<svg style="left:951px;top:1575px;" width="25" height="22" viewBox="0 0 25 22"><path d="M1 11 C1 4 6 1 12.5 1 C19 1 24 4 24 11Z" fill="#b4b4b4"/><circle cx="8" cy="6" r="2" fill="#262626"/><circle cx="17" cy="6" r="2" fill="#262626"/><rect x="10" y="11" width="5" height="6" fill="#b4b4b4"/><rect x="0" y="19" width="25" height="3" fill="#b4b4b4"/></svg>
<svg style="left:982px;top:1576px;" width="22" height="22" viewBox="0 0 22 22"><circle cx="11" cy="11" r="5" fill="none" stroke="#b4b4b4" stroke-width="2"/><path d="M11 0 V5 M11 17 V22 M0 11 H5 M17 11 H22 M3 3 L6.5 6.5 M15.5 15.5 L19 19 M3 19 L6.5 15.5 M15.5 6.5 L19 3" stroke="#b4b4b4" stroke-width="2"/></svg>
<svg style="left:1010px;top:1575px;" width="24" height="24" viewBox="0 0 24 24"><path d="M1 1 L23 23" stroke="#b4b4b4" stroke-width="2.4" stroke-dasharray="4 2"/></svg>
<div class="t" style="left:1039px;top:1565px;font-size:27px;font-style:italic;color:#b4b4b4;font-family:'Liberation Serif',serif;letter-spacing:-1px">fx</div>
<svg style="left:1067px;top:1574px;" width="26" height="24" viewBox="0 0 26 24"><rect x="1" y="1" width="24" height="22" fill="none" stroke="#b4b4b4" stroke-width="2"/><rect x="6" y="6" width="14" height="12" fill="#b4b4b4"/><path d="M3 3 V21 M23 3 V21" stroke="#b4b4b4" stroke-width="2.5" stroke-dasharray="2 2"/></svg>
<svg style="left:1099px;top:1572px;" width="30" height="28" viewBox="0 0 30 28"><circle cx="18" cy="11" r="10" fill="#b4b4b4"/><path d="M8 8 A10 10 0 1 0 22 21" fill="none" stroke="#b4b4b4" stroke-width="2"/><path d="M4 12 A10 10 0 1 0 18 25" fill="none" stroke="#b4b4b4" stroke-width="2"/></svg>
<svg style="left:1131px;top:1574px;" width="24" height="24" viewBox="0 0 24 24"><circle cx="12" cy="12" r="11" fill="none" stroke="#b4b4b4" stroke-width="2"/><path d="M12 1 A11 11 0 0 1 12 23 Z" fill="#b4b4b4" transform="rotate(45 12 12)"/></svg>
<svg style="left:1160px;top:1573px;" width="25" height="26" viewBox="0 0 25 26"><path d="M12.5 1 L24 7 V19 L12.5 25 L1 19 V7Z M1 7 L12.5 13 L24 7 M12.5 13 V25" fill="none" stroke="#b4b4b4" stroke-width="2.2"/></svg>
<div class="t" style="left:1280px;top:1565px;font-size:25px;color:#999;transform:scaleX(0.9147);transform-origin:0 50%">親とリンク</div>
<div style="left:2px;top:1604px;width:1654px;height:36px;background:#2a2a2a"></div>
<div style="left:2px;top:1640px;width:1654px;height:2px;background:#1b1b1b"></div>
<div style="left:1658px;top:1604px;width:14px;height:38px;background:#282828"></div>
<div style="left:1672px;top:1604px;width:1638px;height:38px;background:#2a2a2a"></div>
<div style="left:12px;top:1608px;width:26px;height:26px;background:#1a1a1a"></div>
<svg style="left:12px;top:1612px;" width="26" height="18" viewBox="0 0 26 18"><path d="M1 9 C6 1 20 1 25 9 C20 17 6 17 1 9Z" fill="#b4b4b4"/><circle cx="13" cy="9" r="5" fill="#1a1a1a"/><circle cx="14.5" cy="7.5" r="1.2" fill="#b4b4b4"/></svg>
<div style="left:72px;top:1608px;width:26px;height:26px;background:#1c1c1c"></div>
<div style="left:102px;top:1608px;width:26px;height:26px;background:#1c1c1c"></div>
<svg style="left:152px;top:1619px;" width="15" height="9" viewBox="0 0 15 9"><path d="M1 1 L7.5 8 L14 1" fill="none" stroke="#b8b8b8" stroke-width="2.2"/></svg>
<div style="left:174px;top:1608px;width:28px;height:28px;background:#5f73e0"></div>
<div class="t" style="left:218px;top:1603px;font-size:25px;color:#a8a8a8">1</div>
<svg style="left:255px;top:1610px;" width="24" height="23" viewBox="0 0 24 23"><path d="M12 0 L15 8.5 L24 8.5 L17 14 L19.5 23 L12 17.5 L4.5 23 L7 14 L0 8.5 L9 8.5Z" fill="#b8b8b8"/></svg>
<div class="t" style="left:293px;top:1603px;font-size:25px;color:#a8a8a8;transform:scaleX(0.7417);transform-origin:0 50%">シェイプレイヤー 1</div>
<div style="left:616px;top:1606px;width:139px;height:33px;background:#1a1a1a"></div>
<div class="t" style="left:628px;top:1602px;font-size:24px;color:#c0c0c0;transform:scaleX(0.8750);transform-origin:0 50%">通常</div>
<svg style="left:731px;top:1618px;" width="15" height="9" viewBox="0 0 15 9"><path d="M1 1 L7.5 8 L14 1" fill="none" stroke="#c0c0c0" stroke-width="2.2"/></svg>
<div style="left:764px;top:1608px;width:26px;height:26px;background:#1c1c1c"></div>
<div style="left:950px;top:1607px;width:26px;height:28px;background:#1e1e1e"></div>
<svg style="left:951px;top:1611px;" width="25" height="22" viewBox="0 0 25 22"><path d="M1 11 C1 4 6 1 12.5 1 C19 1 24 4 24 11Z" fill="#b4b4b4"/><circle cx="8" cy="6" r="2" fill="#1e1e1e"/><circle cx="17" cy="6" r="2" fill="#1e1e1e"/><rect x="10" y="11" width="5" height="6" fill="#b4b4b4"/><rect x="0" y="19" width="25" height="3" fill="#b4b4b4"/></svg>
<div style="left:980px;top:1607px;width:26px;height:28px;background:#1e1e1e"></div>
<svg style="left:982px;top:1612px;" width="22" height="22" viewBox="0 0 22 22"><circle cx="11" cy="11" r="4.5" fill="none" stroke="#666" stroke-width="1.8"/><path d="M11 1 V5 M11 17 V21 M1 11 H5 M17 11 H21 M4 4 L7 7 M15 15 L18 18 M4 18 L7 15 M15 7 L18 4" stroke="#666" stroke-width="1.8"/></svg>
<div style="left:1010px;top:1607px;width:26px;height:28px;background:#1e1e1e"></div>
<svg style="left:1011px;top:1611px;" width="24" height="24" viewBox="0 0 24 24"><path d="M2 22 L22 2" stroke="#c0c0c0" stroke-width="2.4"/></svg>
<div style="left:1100px;top:1607px;width:26px;height:28px;background:#1e1e1e"></div>
<div style="left:1130px;top:1607px;width:26px;height:28px;background:#1e1e1e"></div>
<div style="left:1160px;top:1607px;width:26px;height:28px;background:#1e1e1e"></div>
<svg style="left:1278px;top:1610px;" width="26" height="26" viewBox="0 0 26 26"><path d="M13 13 m0 -3 a3 3 0 1 1 -3 3 a6 6 0 1 1 6 6 a9 9 0 1 1 9 -9" fill="none" stroke="#b4b4b4" stroke-width="2.2"/></svg>
<div style="left:1315px;top:1606px;width:301px;height:33px;background:#1a1a1a"></div>
<div class="t" style="left:1326px;top:1602px;font-size:24px;color:#c0c0c0;transform:scaleX(0.8400);transform-origin:0 50%">なし</div>
<svg style="left:1591px;top:1618px;" width="15" height="9" viewBox="0 0 15 9"><path d="M1 1 L7.5 8 L14 1" fill="none" stroke="#c0c0c0" stroke-width="2.2"/></svg>
<div style="left:1672px;top:1606px;width:1636px;height:32px;background:#485587;border-top:2px solid #56639a"></div>
<div style="left:2px;top:1642px;width:1654px;height:36px;background:#222222"></div>
<div style="left:2px;top:1678px;width:1654px;height:2px;background:#1b1b1b"></div>
<div style="left:1658px;top:1642px;width:14px;height:38px;background:#282828"></div>
<div style="left:1672px;top:1642px;width:1638px;height:38px;background:#2c2c2c"></div>
<svg style="left:189px;top:1657px;" width="15" height="9" viewBox="0 0 15 9"><path d="M1 1 L7.5 8 L14 1" fill="none" stroke="#b8b8b8" stroke-width="2.2"/></svg>
<div class="t" style="left:223px;top:1640px;font-size:25px;color:#a8a8a8;transform:scaleX(0.7308);transform-origin:0 50%">コンテンツ</div>
<div class="t" style="left:1178px;top:1640px;font-size:24px;color:#c0c0c0;transform:scaleX(0.8963);transform-origin:0 50%">追加:</div>
<svg style="left:1236px;top:1650px;" width="22" height="22" viewBox="0 0 22 22"><circle cx="11" cy="11" r="10.5" fill="#c8c8c8"/><path d="M8 5 L16 11 L8 17Z" fill="#222"/></svg>
<div style="left:2px;top:1680px;width:1654px;height:36px;background:#222222"></div>
<div style="left:2px;top:1716px;width:1654px;height:2px;background:#1b1b1b"></div>
<div style="left:1658px;top:1680px;width:14px;height:38px;background:#282828"></div>
<div style="left:1672px;top:1680px;width:1638px;height:38px;background:#2c2c2c"></div>
<div style="left:12px;top:1684px;width:26px;height:26px;background:#1a1a1a"></div>
<svg style="left:12px;top:1688px;" width="26" height="18" viewBox="0 0 26 18"><path d="M1 9 C6 1 20 1 25 9 C20 17 6 17 1 9Z" fill="#b4b4b4"/><circle cx="13" cy="9" r="5" fill="#1a1a1a"/><circle cx="14.5" cy="7.5" r="1.2" fill="#b4b4b4"/></svg>
<svg style="left:228px;top:1691px;" width="9" height="16" viewBox="0 0 9 16"><path d="M1 1 L8 8 L1 15" fill="none" stroke="#b8b8b8" stroke-width="2.2"/></svg>
<div class="t" style="left:261px;top:1678px;font-size:25px;color:#a8a8a8;transform:scaleX(0.8659);transform-origin:0 50%">楕円形 1</div>
<div style="left:950px;top:1682px;width:309px;height:34px;background:#1a1a1a"></div>
<div class="t" style="left:962px;top:1678px;font-size:24px;color:#c0c0c0;transform:scaleX(0.8750);transform-origin:0 50%">通常</div>
<svg style="left:1230px;top:1694px;" width="15" height="9" viewBox="0 0 15 9"><path d="M1 1 L7.5 8 L14 1" fill="none" stroke="#c0c0c0" stroke-width="2.2"/></svg>
<div style="left:2px;top:1718px;width:1654px;height:36px;background:#222222"></div>
<div style="left:2px;top:1754px;width:1654px;height:2px;background:#1b1b1b"></div>
<div style="left:1658px;top:1718px;width:14px;height:38px;background:#282828"></div>
<div style="left:1672px;top:1718px;width:1638px;height:38px;background:#2c2c2c"></div>
<svg style="left:191px;top:1729px;" width="9" height="16" viewBox="0 0 9 16"><path d="M1 1 L8 8 L1 15" fill="none" stroke="#b8b8b8" stroke-width="2.2"/></svg>
<div class="t" style="left:223px;top:1716px;font-size:25px;color:#a8a8a8;transform:scaleX(0.7101);transform-origin:0 50%">トランスフォーム</div>
<div class="t blue" style="left:949px;top:1717px;font-size:20px;transform:scaleX(0.5500);transform-origin:0 50%">リセット</div>
<div style="left:2px;top:1756px;width:1654px;height:36px;background:#2a2a2a"></div>
<div style="left:2px;top:1792px;width:1654px;height:2px;background:#1b1b1b"></div>
<div style="left:1658px;top:1756px;width:14px;height:38px;background:#282828"></div>
<div style="left:1672px;top:1756px;width:1638px;height:38px;background:#2a2a2a"></div>
<div style="left:12px;top:1760px;width:26px;height:26px;background:#1a1a1a"></div>
<svg style="left:12px;top:1764px;" width="26" height="18" viewBox="0 0 26 18"><path d="M1 9 C6 1 20 1 25 9 C20 17 6 17 1 9Z" fill="#b4b4b4"/><circle cx="13" cy="9" r="5" fill="#1a1a1a"/><circle cx="14.5" cy="7.5" r="1.2" fill="#b4b4b4"/></svg>
<div style="left:72px;top:1760px;width:26px;height:26px;background:#1c1c1c"></div>
<div style="left:102px;top:1760px;width:26px;height:26px;background:#1c1c1c"></div>
<svg style="left:155px;top:1767px;" width="9" height="16" viewBox="0 0 9 16"><path d="M1 1 L8 8 L1 15" fill="none" stroke="#b8b8b8" stroke-width="2.2"/></svg>
<div style="left:174px;top:1760px;width:28px;height:28px;background:#5f73e0"></div>
<div class="t" style="left:218px;top:1755px;font-size:25px;color:#a8a8a8">2</div>
<svg style="left:255px;top:1762px;" width="24" height="23" viewBox="0 0 24 23"><path d="M12 0 L15 8.5 L24 8.5 L17 14 L19.5 23 L12 17.5 L4.5 23 L7 14 L0 8.5 L9 8.5Z" fill="#b8b8b8"/></svg>
<div class="t" style="left:293px;top:1755px;font-size:25px;color:#a8a8a8;transform:scaleX(0.9213);transform-origin:0 50%">Message-Typing</div>
<div style="left:616px;top:1758px;width:139px;height:33px;background:#1a1a1a"></div>
<div class="t" style="left:628px;top:1754px;font-size:24px;color:#c0c0c0;transform:scaleX(0.8750);transform-origin:0 50%">通常</div>
<svg style="left:731px;top:1770px;" width="15" height="9" viewBox="0 0 15 9"><path d="M1 1 L7.5 8 L14 1" fill="none" stroke="#c0c0c0" stroke-width="2.2"/></svg>
<div style="left:764px;top:1760px;width:26px;height:26px;background:#1c1c1c"></div>
<div style="left:803px;top:1758px;width:128px;height:33px;background:#1a1a1a"></div>
<div class="t" style="left:815px;top:1754px;font-size:24px;color:#c0c0c0;transform:scaleX(0.8400);transform-origin:0 50%">なし</div>
<svg style="left:905px;top:1770px;" width="15" height="9" viewBox="0 0 15 9"><path d="M1 1 L7.5 8 L14 1" fill="none" stroke="#c0c0c0" stroke-width="2.2"/></svg>
<div style="left:950px;top:1759px;width:26px;height:28px;background:#1e1e1e"></div>
<svg style="left:951px;top:1763px;" width="25" height="22" viewBox="0 0 25 22"><path d="M1 11 C1 4 6 1 12.5 1 C19 1 24 4 24 11Z" fill="#b4b4b4"/><circle cx="8" cy="6" r="2" fill="#1e1e1e"/><circle cx="17" cy="6" r="2" fill="#1e1e1e"/><rect x="10" y="11" width="5" height="6" fill="#b4b4b4"/><rect x="0" y="19" width="25" height="3" fill="#b4b4b4"/></svg>
<div style="left:980px;top:1759px;width:26px;height:28px;background:#1e1e1e"></div>
<svg style="left:982px;top:1764px;" width="22" height="22" viewBox="0 0 22 22"><circle cx="11" cy="11" r="4.5" fill="none" stroke="#666" stroke-width="1.8"/><path d="M11 1 V5 M11 17 V21 M1 11 H5 M17 11 H21 M4 4 L7 7 M15 15 L18 18 M4 18 L7 15 M15 7 L18 4" stroke="#666" stroke-width="1.8"/></svg>
<div style="left:1010px;top:1759px;width:26px;height:28px;background:#1e1e1e"></div>
<svg style="left:1011px;top:1763px;" width="24" height="24" viewBox="0 0 24 24"><path d="M2 22 L22 2" stroke="#c0c0c0" stroke-width="2.4"/></svg>
<div style="left:1100px;top:1759px;width:26px;height:28px;background:#1e1e1e"></div>
<div style="left:1130px;top:1759px;width:26px;height:28px;background:#1e1e1e"></div>
<div style="left:1160px;top:1759px;width:26px;height:28px;background:#1e1e1e"></div>
<svg style="left:1278px;top:1762px;" width="26" height="26" viewBox="0 0 26 26"><path d="M13 13 m0 -3 a3 3 0 1 1 -3 3 a6 6 0 1 1 6 6 a9 9 0 1 1 9 -9" fill="none" stroke="#b4b4b4" stroke-width="2.2"/></svg>
<div style="left:1315px;top:1758px;width:301px;height:33px;background:#1a1a1a"></div>
<div class="t" style="left:1326px;top:1754px;font-size:24px;color:#c0c0c0;transform:scaleX(0.8400);transform-origin:0 50%">なし</div>
<svg style="left:1591px;top:1770px;" width="15" height="9" viewBox="0 0 15 9"><path d="M1 1 L7.5 8 L14 1" fill="none" stroke="#c0c0c0" stroke-width="2.2"/></svg>
<div style="left:1672px;top:1758px;width:1636px;height:32px;background:#485587;border-top:2px solid #56639a"></div>
<div style="left:2px;top:1794px;width:1654px;height:36px;background:#2a2a2a"></div>
<div style="left:2px;top:1830px;width:1654px;height:2px;background:#1b1b1b"></div>
<div style="left:1658px;top:1794px;width:14px;height:38px;background:#282828"></div>
<div style="left:1672px;top:1794px;width:1638px;height:38px;background:#2a2a2a"></div>
<div style="left:12px;top:1798px;width:26px;height:26px;background:#1a1a1a"></div>
<svg style="left:12px;top:1802px;" width="26" height="18" viewBox="0 0 26 18"><path d="M1 9 C6 1 20 1 25 9 C20 17 6 17 1 9Z" fill="#b4b4b4"/><circle cx="13" cy="9" r="5" fill="#1a1a1a"/><circle cx="14.5" cy="7.5" r="1.2" fill="#b4b4b4"/></svg>
<div style="left:72px;top:1798px;width:26px;height:26px;background:#1c1c1c"></div>
<div style="left:102px;top:1798px;width:26px;height:26px;background:#1c1c1c"></div>
<svg style="left:155px;top:1805px;" width="9" height="16" viewBox="0 0 9 16"><path d="M1 1 L8 8 L1 15" fill="none" stroke="#b8b8b8" stroke-width="2.2"/></svg>
<div style="left:174px;top:1798px;width:28px;height:28px;background:#b83333"></div>
<div class="t" style="left:218px;top:1793px;font-size:25px;color:#a8a8a8">3</div>
<div class="t" style="left:256px;top:1792px;font-size:28px;color:#b8b8b8;font-family:'Liberation Serif',serif">T</div>
<div class="t" style="left:293px;top:1793px;font-size:25px;color:#a8a8a8;transform:scaleX(0.7398);transform-origin:0 50%">カツカレーが食...ると嬉しいかも。</div>
<div style="left:616px;top:1796px;width:139px;height:33px;background:#1a1a1a"></div>
<div class="t" style="left:628px;top:1792px;font-size:24px;color:#c0c0c0;transform:scaleX(0.8750);transform-origin:0 50%">通常</div>
<svg style="left:731px;top:1808px;" width="15" height="9" viewBox="0 0 15 9"><path d="M1 1 L7.5 8 L14 1" fill="none" stroke="#c0c0c0" stroke-width="2.2"/></svg>
<div style="left:764px;top:1798px;width:26px;height:26px;background:#1c1c1c"></div>
<div style="left:803px;top:1796px;width:128px;height:33px;background:#1a1a1a"></div>
<div class="t" style="left:815px;top:1792px;font-size:24px;color:#c0c0c0;transform:scaleX(0.8400);transform-origin:0 50%">なし</div>
<svg style="left:905px;top:1808px;" width="15" height="9" viewBox="0 0 15 9"><path d="M1 1 L7.5 8 L14 1" fill="none" stroke="#c0c0c0" stroke-width="2.2"/></svg>
<div style="left:950px;top:1797px;width:26px;height:28px;background:#1e1e1e"></div>
<svg style="left:951px;top:1801px;" width="25" height="22" viewBox="0 0 25 22"><path d="M1 11 C1 4 6 1 12.5 1 C19 1 24 4 24 11Z" fill="#b4b4b4"/><circle cx="8" cy="6" r="2" fill="#1e1e1e"/><circle cx="17" cy="6" r="2" fill="#1e1e1e"/><rect x="10" y="11" width="5" height="6" fill="#b4b4b4"/><rect x="0" y="19" width="25" height="3" fill="#b4b4b4"/></svg>
<div style="left:980px;top:1797px;width:26px;height:28px;background:#1e1e1e"></div>
<svg style="left:982px;top:1802px;" width="22" height="22" viewBox="0 0 22 22"><circle cx="11" cy="11" r="4.5" fill="none" stroke="#666" stroke-width="1.8"/><path d="M11 1 V5 M11 17 V21 M1 11 H5 M17 11 H21 M4 4 L7 7 M15 15 L18 18 M4 18 L7 15 M15 7 L18 4" stroke="#666" stroke-width="1.8"/></svg>
<div style="left:1010px;top:1797px;width:26px;height:28px;background:#1e1e1e"></div>
<svg style="left:1011px;top:1801px;" width="24" height="24" viewBox="0 0 24 24"><path d="M2 22 L22 2" stroke="#c0c0c0" stroke-width="2.4"/></svg>
<div style="left:1100px;top:1797px;width:26px;height:28px;background:#1e1e1e"></div>
<div style="left:1130px;top:1797px;width:26px;height:28px;background:#1e1e1e"></div>
<div style="left:1160px;top:1797px;width:26px;height:28px;background:#1e1e1e"></div>
<svg style="left:1278px;top:1800px;" width="26" height="26" viewBox="0 0 26 26"><path d="M13 13 m0 -3 a3 3 0 1 1 -3 3 a6 6 0 1 1 6 6 a9 9 0 1 1 9 -9" fill="none" stroke="#b4b4b4" stroke-width="2.2"/></svg>
<div style="left:1315px;top:1796px;width:301px;height:33px;background:#1a1a1a"></div>
<div class="t" style="left:1326px;top:1792px;font-size:24px;color:#c0c0c0;transform:scaleX(0.8400);transform-origin:0 50%">なし</div>
<svg style="left:1591px;top:1808px;" width="15" height="9" viewBox="0 0 15 9"><path d="M1 1 L7.5 8 L14 1" fill="none" stroke="#c0c0c0" stroke-width="2.2"/></svg>
<div style="left:1672px;top:1796px;width:1636px;height:32px;background:#6e3536;border-top:2px solid #7d4343"></div>
<div style="left:2px;top:1833px;width:1654px;height:36px;background:#2a2a2a"></div>
<div style="left:2px;top:1869px;width:1654px;height:2px;background:#1b1b1b"></div>
<div style="left:1658px;top:1833px;width:14px;height:38px;background:#282828"></div>
<div style="left:1672px;top:1833px;width:1638px;height:38px;background:#2a2a2a"></div>
<div style="left:12px;top:1837px;width:26px;height:26px;background:#1a1a1a"></div>
<svg style="left:12px;top:1841px;" width="26" height="18" viewBox="0 0 26 18"><path d="M1 9 C6 1 20 1 25 9 C20 17 6 17 1 9Z" fill="#b4b4b4"/><circle cx="13" cy="9" r="5" fill="#1a1a1a"/><circle cx="14.5" cy="7.5" r="1.2" fill="#b4b4b4"/></svg>
<div style="left:72px;top:1837px;width:26px;height:26px;background:#1c1c1c"></div>
<div style="left:102px;top:1837px;width:26px;height:26px;background:#1c1c1c"></div>
<svg style="left:155px;top:1844px;" width="9" height="16" viewBox="0 0 9 16"><path d="M1 1 L8 8 L1 15" fill="none" stroke="#b8b8b8" stroke-width="2.2"/></svg>
<div style="left:174px;top:1837px;width:28px;height:28px;background:#5f73e0"></div>
<div class="t" style="left:218px;top:1832px;font-size:25px;color:#a8a8a8">4</div>
<svg style="left:255px;top:1839px;" width="24" height="23" viewBox="0 0 24 23"><path d="M12 0 L15 8.5 L24 8.5 L17 14 L19.5 23 L12 17.5 L4.5 23 L7 14 L0 8.5 L9 8.5Z" fill="#b8b8b8"/></svg>
<div class="t" style="left:293px;top:1832px;font-size:25px;color:#a8a8a8;transform:scaleX(0.9375);transform-origin:0 50%">Message-Left</div>
<div style="left:616px;top:1835px;width:139px;height:33px;background:#1a1a1a"></div>
<div class="t" style="left:628px;top:1831px;font-size:24px;color:#c0c0c0;transform:scaleX(0.8750);transform-origin:0 50%">通常</div>
<svg style="left:731px;top:1847px;" width="15" height="9" viewBox="0 0 15 9"><path d="M1 1 L7.5 8 L14 1" fill="none" stroke="#c0c0c0" stroke-width="2.2"/></svg>
<div style="left:764px;top:1837px;width:26px;height:26px;background:#1c1c1c"></div>
<div style="left:803px;top:1835px;width:128px;height:33px;background:#1a1a1a"></div>
<div class="t" style="left:815px;top:1831px;font-size:24px;color:#c0c0c0;transform:scaleX(0.8400);transform-origin:0 50%">なし</div>
<svg style="left:905px;top:1847px;" width="15" height="9" viewBox="0 0 15 9"><path d="M1 1 L7.5 8 L14 1" fill="none" stroke="#c0c0c0" stroke-width="2.2"/></svg>
<div style="left:950px;top:1836px;width:26px;height:28px;background:#1e1e1e"></div>
<svg style="left:951px;top:1840px;" width="25" height="22" viewBox="0 0 25 22"><path d="M1 11 C1 4 6 1 12.5 1 C19 1 24 4 24 11Z" fill="#b4b4b4"/><circle cx="8" cy="6" r="2" fill="#1e1e1e"/><circle cx="17" cy="6" r="2" fill="#1e1e1e"/><rect x="10" y="11" width="5" height="6" fill="#b4b4b4"/><rect x="0" y="19" width="25" height="3" fill="#b4b4b4"/></svg>
<div style="left:980px;top:1836px;width:26px;height:28px;background:#1e1e1e"></div>
<svg style="left:982px;top:1841px;" width="22" height="22" viewBox="0 0 22 22"><circle cx="11" cy="11" r="4.5" fill="none" stroke="#666" stroke-width="1.8"/><path d="M11 1 V5 M11 17 V21 M1 11 H5 M17 11 H21 M4 4 L7 7 M15 15 L18 18 M4 18 L7 15 M15 7 L18 4" stroke="#666" stroke-width="1.8"/></svg>
<div style="left:1010px;top:1836px;width:26px;height:28px;background:#1e1e1e"></div>
<svg style="left:1011px;top:1840px;" width="24" height="24" viewBox="0 0 24 24"><path d="M2 22 L22 2" stroke="#c0c0c0" stroke-width="2.4"/></svg>
<div style="left:1100px;top:1836px;width:26px;height:28px;background:#1e1e1e"></div>
<div style="left:1130px;top:1836px;width:26px;height:28px;background:#1e1e1e"></div>
<div style="left:1160px;top:1836px;width:26px;height:28px;background:#1e1e1e"></div>
<svg style="left:1278px;top:1839px;" width="26" height="26" viewBox="0 0 26 26"><path d="M13 13 m0 -3 a3 3 0 1 1 -3 3 a6 6 0 1 1 6 6 a9 9 0 1 1 9 -9" fill="none" stroke="#b4b4b4" stroke-width="2.2"/></svg>
<div style="left:1315px;top:1835px;width:301px;height:33px;background:#1a1a1a"></div>
<div class="t" style="left:1326px;top:1831px;font-size:24px;color:#c0c0c0;transform:scaleX(0.8400);transform-origin:0 50%">なし</div>
<svg style="left:1591px;top:1847px;" width="15" height="9" viewBox="0 0 15 9"><path d="M1 1 L7.5 8 L14 1" fill="none" stroke="#c0c0c0" stroke-width="2.2"/></svg>
<div style="left:1672px;top:1835px;width:1636px;height:32px;background:#485587;border-top:2px solid #56639a"></div>
<div style="left:2px;top:1871px;width:1654px;height:36px;background:#2a2a2a"></div>
<div style="left:2px;top:1907px;width:1654px;height:2px;background:#1b1b1b"></div>
<div style="left:1658px;top:1871px;width:14px;height:38px;background:#282828"></div>
<div style="left:1672px;top:1871px;width:1638px;height:38px;background:#2a2a2a"></div>
<div style="left:12px;top:1875px;width:26px;height:26px;background:#1a1a1a"></div>
<svg style="left:12px;top:1879px;" width="26" height="18" viewBox="0 0 26 18"><path d="M1 9 C6 1 20 1 25 9 C20 17 6 17 1 9Z" fill="#b4b4b4"/><circle cx="13" cy="9" r="5" fill="#1a1a1a"/><circle cx="14.5" cy="7.5" r="1.2" fill="#b4b4b4"/></svg>
<div style="left:72px;top:1875px;width:26px;height:26px;background:#1c1c1c"></div>
<div style="left:102px;top:1875px;width:26px;height:26px;background:#1c1c1c"></div>
<svg style="left:155px;top:1882px;" width="9" height="16" viewBox="0 0 9 16"><path d="M1 1 L8 8 L1 15" fill="none" stroke="#b8b8b8" stroke-width="2.2"/></svg>
<div style="left:174px;top:1875px;width:28px;height:28px;background:#b83333"></div>
<div class="t" style="left:218px;top:1870px;font-size:25px;color:#a8a8a8">5</div>
<div class="t" style="left:256px;top:1869px;font-size:28px;color:#b8b8b8;font-family:'Liberation Serif',serif">T</div>
<div class="t" style="left:293px;top:1870px;font-size:25px;color:#a8a8a8;transform:scaleX(0.8065);transform-origin:0 50%">ねぇ、今日の夕食何がいい?</div>
<div style="left:616px;top:1873px;width:139px;height:33px;background:#1a1a1a"></div>
<div class="t" style="left:628px;top:1869px;font-size:24px;color:#c0c0c0;transform:scaleX(0.8750);transform-origin:0 50%">通常</div>
<svg style="left:731px;top:1885px;" width="15" height="9" viewBox="0 0 15 9"><path d="M1 1 L7.5 8 L14 1" fill="none" stroke="#c0c0c0" stroke-width="2.2"/></svg>
<div style="left:764px;top:1875px;width:26px;height:26px;background:#1c1c1c"></div>
<div style="left:803px;top:1873px;width:128px;height:33px;background:#1a1a1a"></div>
<div class="t" style="left:815px;top:1869px;font-size:24px;color:#c0c0c0;transform:scaleX(0.8400);transform-origin:0 50%">なし</div>
<svg style="left:905px;top:1885px;" width="15" height="9" viewBox="0 0 15 9"><path d="M1 1 L7.5 8 L14 1" fill="none" stroke="#c0c0c0" stroke-width="2.2"/></svg>
<div style="left:950px;top:1874px;width:26px;height:28px;background:#1e1e1e"></div>
<svg style="left:951px;top:1878px;" width="25" height="22" viewBox="0 0 25 22"><path d="M1 11 C1 4 6 1 12.5 1 C19 1 24 4 24 11Z" fill="#b4b4b4"/><circle cx="8" cy="6" r="2" fill="#1e1e1e"/><circle cx="17" cy="6" r="2" fill="#1e1e1e"/><rect x="10" y="11" width="5" height="6" fill="#b4b4b4"/><rect x="0" y="19" width="25" height="3" fill="#b4b4b4"/></svg>
<div style="left:980px;top:1874px;width:26px;height:28px;background:#1e1e1e"></div>
<svg style="left:982px;top:1879px;" width="22" height="22" viewBox="0 0 22 22"><circle cx="11" cy="11" r="4.5" fill="none" stroke="#666" stroke-width="1.8"/><path d="M11 1 V5 M11 17 V21 M1 11 H5 M17 11 H21 M4 4 L7 7 M15 15 L18 18 M4 18 L7 15 M15 7 L18 4" stroke="#666" stroke-width="1.8"/></svg>
<div style="left:1010px;top:1874px;width:26px;height:28px;background:#1e1e1e"></div>
<svg style="left:1011px;top:1878px;" width="24" height="24" viewBox="0 0 24 24"><path d="M2 22 L22 2" stroke="#c0c0c0" stroke-width="2.4"/></svg>
<div style="left:1100px;top:1874px;width:26px;height:28px;background:#1e1e1e"></div>
<div style="left:1130px;top:1874px;width:26px;height:28px;background:#1e1e1e"></div>
<div style="left:1160px;top:1874px;width:26px;height:28px;background:#1e1e1e"></div>
<svg style="left:1278px;top:1877px;" width="26" height="26" viewBox="0 0 26 26"><path d="M13 13 m0 -3 a3 3 0 1 1 -3 3 a6 6 0 1 1 6 6 a9 9 0 1 1 9 -9" fill="none" stroke="#b4b4b4" stroke-width="2.2"/></svg>
<div style="left:1315px;top:1873px;width:301px;height:33px;background:#1a1a1a"></div>
<div class="t" style="left:1326px;top:1869px;font-size:24px;color:#c0c0c0;transform:scaleX(0.8400);transform-origin:0 50%">なし</div>
<svg style="left:1591px;top:1885px;" width="15" height="9" viewBox="0 0 15 9"><path d="M1 1 L7.5 8 L14 1" fill="none" stroke="#c0c0c0" stroke-width="2.2"/></svg>
<div style="left:1672px;top:1873px;width:1636px;height:32px;background:#6e3536;border-top:2px solid #7d4343"></div>
<div style="left:2px;top:1909px;width:1654px;height:36px;background:#2a2a2a"></div>
<div style="left:2px;top:1945px;width:1654px;height:2px;background:#1b1b1b"></div>
<div style="left:1658px;top:1909px;width:14px;height:38px;background:#282828"></div>
<div style="left:1672px;top:1909px;width:1638px;height:38px;background:#2a2a2a"></div>
<div style="left:12px;top:1913px;width:26px;height:26px;background:#1a1a1a"></div>
<svg style="left:12px;top:1917px;" width="26" height="18" viewBox="0 0 26 18"><path d="M1 9 C6 1 20 1 25 9 C20 17 6 17 1 9Z" fill="#b4b4b4"/><circle cx="13" cy="9" r="5" fill="#1a1a1a"/><circle cx="14.5" cy="7.5" r="1.2" fill="#b4b4b4"/></svg>
<div style="left:72px;top:1913px;width:26px;height:26px;background:#1c1c1c"></div>
<div style="left:102px;top:1913px;width:26px;height:26px;background:#1c1c1c"></div>
<svg style="left:152px;top:1924px;" width="15" height="9" viewBox="0 0 15 9"><path d="M1 1 L7.5 8 L14 1" fill="none" stroke="#b8b8b8" stroke-width="2.2"/></svg>
<div style="left:174px;top:1913px;width:28px;height:28px;background:#5f73e0"></div>
<div class="t" style="left:218px;top:1908px;font-size:25px;color:#a8a8a8">6</div>
<svg style="left:255px;top:1915px;" width="24" height="23" viewBox="0 0 24 23"><path d="M12 0 L15 8.5 L24 8.5 L17 14 L19.5 23 L12 17.5 L4.5 23 L7 14 L0 8.5 L9 8.5Z" fill="#b8b8b8"/></svg>
<div class="t" style="left:293px;top:1908px;font-size:25px;color:#a8a8a8;transform:scaleX(0.9040);transform-origin:0 50%">Message-Right</div>
<div style="left:616px;top:1911px;width:139px;height:33px;background:#1a1a1a"></div>
<div class="t" style="left:628px;top:1907px;font-size:24px;color:#c0c0c0;transform:scaleX(0.8750);transform-origin:0 50%">通常</div>
<svg style="left:731px;top:1923px;" width="15" height="9" viewBox="0 0 15 9"><path d="M1 1 L7.5 8 L14 1" fill="none" stroke="#c0c0c0" stroke-width="2.2"/></svg>
<div style="left:764px;top:1913px;width:26px;height:26px;background:#1c1c1c"></div>
<div style="left:803px;top:1911px;width:128px;height:33px;background:#1a1a1a"></div>
<div class="t" style="left:815px;top:1907px;font-size:24px;color:#c0c0c0;transform:scaleX(0.8400);transform-origin:0 50%">なし</div>
<svg style="left:905px;top:1923px;" width="15" height="9" viewBox="0 0 15 9"><path d="M1 1 L7.5 8 L14 1" fill="none" stroke="#c0c0c0" stroke-width="2.2"/></svg>
<div style="left:950px;top:1912px;width:26px;height:28px;background:#1e1e1e"></div>
<svg style="left:951px;top:1916px;" width="25" height="22" viewBox="0 0 25 22"><path d="M1 11 C1 4 6 1 12.5 1 C19 1 24 4 24 11Z" fill="#b4b4b4"/><circle cx="8" cy="6" r="2" fill="#1e1e1e"/><circle cx="17" cy="6" r="2" fill="#1e1e1e"/><rect x="10" y="11" width="5" height="6" fill="#b4b4b4"/><rect x="0" y="19" width="25" height="3" fill="#b4b4b4"/></svg>
<div style="left:980px;top:1912px;width:26px;height:28px;background:#1e1e1e"></div>
<svg style="left:982px;top:1917px;" width="22" height="22" viewBox="0 0 22 22"><circle cx="11" cy="11" r="4.5" fill="none" stroke="#666" stroke-width="1.8"/><path d="M11 1 V5 M11 17 V21 M1 11 H5 M17 11 H21 M4 4 L7 7 M15 15 L18 18 M4 18 L7 15 M15 7 L18 4" stroke="#666" stroke-width="1.8"/></svg>
<div style="left:1010px;top:1912px;width:26px;height:28px;background:#1e1e1e"></div>
<svg style="left:1011px;top:1916px;" width="24" height="24" viewBox="0 0 24 24"><path d="M2 22 L22 2" stroke="#c0c0c0" stroke-width="2.4"/></svg>
<div style="left:1100px;top:1912px;width:26px;height:28px;background:#1e1e1e"></div>
<div style="left:1130px;top:1912px;width:26px;height:28px;background:#1e1e1e"></div>
<div style="left:1160px;top:1912px;width:26px;height:28px;background:#1e1e1e"></div>
<svg style="left:1278px;top:1915px;" width="26" height="26" viewBox="0 0 26 26"><path d="M13 13 m0 -3 a3 3 0 1 1 -3 3 a6 6 0 1 1 6 6 a9 9 0 1 1 9 -9" fill="none" stroke="#b4b4b4" stroke-width="2.2"/></svg>
<div style="left:1315px;top:1911px;width:301px;height:33px;background:#1a1a1a"></div>
<div class="t" style="left:1326px;top:1907px;font-size:24px;color:#c0c0c0;transform:scaleX(0.8400);transform-origin:0 50%">なし</div>
<svg style="left:1591px;top:1923px;" width="15" height="9" viewBox="0 0 15 9"><path d="M1 1 L7.5 8 L14 1" fill="none" stroke="#c0c0c0" stroke-width="2.2"/></svg>
<div style="left:1672px;top:1911px;width:1636px;height:32px;background:#485587;border-top:2px solid #56639a"></div>
<div style="left:2px;top:1947px;width:1654px;height:36px;background:#222222"></div>
<div style="left:2px;top:1983px;width:1654px;height:2px;background:#1b1b1b"></div>
<div style="left:1658px;top:1947px;width:14px;height:38px;background:#282828"></div>
<div style="left:1672px;top:1947px;width:1638px;height:38px;background:#2c2c2c"></div>
<svg style="left:189px;top:1962px;" width="15" height="9" viewBox="0 0 15 9"><path d="M1 1 L7.5 8 L14 1" fill="none" stroke="#b8b8b8" stroke-width="2.2"/></svg>
<div class="t" style="left:223px;top:1945px;font-size:25px;color:#a8a8a8;transform:scaleX(0.7308);transform-origin:0 50%">コンテンツ</div>
<div class="t" style="left:1178px;top:1945px;font-size:24px;color:#c0c0c0;transform:scaleX(0.8963);transform-origin:0 50%">追加:</div>
<svg style="left:1236px;top:1955px;" width="22" height="22" viewBox="0 0 22 22"><circle cx="11" cy="11" r="10.5" fill="#c8c8c8"/><path d="M8 5 L16 11 L8 17Z" fill="#222"/></svg>
<div style="left:2px;top:1985px;width:1654px;height:36px;background:#222222"></div>
<div style="left:2px;top:2021px;width:1654px;height:2px;background:#1b1b1b"></div>
<div style="left:1658px;top:1985px;width:14px;height:38px;background:#282828"></div>
<div style="left:1672px;top:1985px;width:1638px;height:38px;background:#2c2c2c"></div>
<div style="left:12px;top:1989px;width:26px;height:26px;background:#1a1a1a"></div>
<svg style="left:12px;top:1993px;" width="26" height="18" viewBox="0 0 26 18"><path d="M1 9 C6 1 20 1 25 9 C20 17 6 17 1 9Z" fill="#b4b4b4"/><circle cx="13" cy="9" r="5" fill="#1a1a1a"/><circle cx="14.5" cy="7.5" r="1.2" fill="#b4b4b4"/></svg>
<svg style="left:228px;top:1996px;" width="9" height="16" viewBox="0 0 9 16"><path d="M1 1 L8 8 L1 15" fill="none" stroke="#b8b8b8" stroke-width="2.2"/></svg>
<div class="t" style="left:261px;top:1983px;font-size:25px;color:#a8a8a8;transform:scaleX(0.8659);transform-origin:0 50%">長方形 1</div>
<div style="left:950px;top:1987px;width:309px;height:34px;background:#1a1a1a"></div>
<div class="t" style="left:962px;top:1983px;font-size:24px;color:#c0c0c0;transform:scaleX(0.8750);transform-origin:0 50%">通常</div>
<svg style="left:1230px;top:1999px;" width="15" height="9" viewBox="0 0 15 9"><path d="M1 1 L7.5 8 L14 1" fill="none" stroke="#c0c0c0" stroke-width="2.2"/></svg>
<div style="left:2px;top:2023px;width:1654px;height:36px;background:#222222"></div>
<div style="left:2px;top:2059px;width:1654px;height:2px;background:#1b1b1b"></div>
<div style="left:1658px;top:2023px;width:14px;height:38px;background:#282828"></div>
<div style="left:1672px;top:2023px;width:1638px;height:38px;background:#2c2c2c"></div>
<div style="left:12px;top:2027px;width:26px;height:26px;background:#1a1a1a"></div>
<svg style="left:12px;top:2031px;" width="26" height="18" viewBox="0 0 26 18"><path d="M1 9 C6 1 20 1 25 9 C20 17 6 17 1 9Z" fill="#b4b4b4"/><circle cx="13" cy="9" r="5" fill="#1a1a1a"/><circle cx="14.5" cy="7.5" r="1.2" fill="#b4b4b4"/></svg>
<svg style="left:228px;top:2034px;" width="9" height="16" viewBox="0 0 9 16"><path d="M1 1 L8 8 L1 15" fill="none" stroke="#b8b8b8" stroke-width="2.2"/></svg>
<div class="t" style="left:261px;top:2021px;font-size:25px;color:#a8a8a8;transform:scaleX(0.8659);transform-origin:0 50%">多角形 1</div>
<div style="left:950px;top:2025px;width:309px;height:34px;background:#1a1a1a"></div>
<div class="t" style="left:962px;top:2021px;font-size:24px;color:#c0c0c0;transform:scaleX(0.8750);transform-origin:0 50%">通常</div>
<svg style="left:1230px;top:2037px;" width="15" height="9" viewBox="0 0 15 9"><path d="M1 1 L7.5 8 L14 1" fill="none" stroke="#c0c0c0" stroke-width="2.2"/></svg>
<div style="left:1656px;top:1566px;width:2px;height:497px;background:#0c0c0c"></div>
<div style="left:1658px;top:1442px;width:1697px;height:121px;background:#232323"></div>
<div style="left:1658px;top:1503px;width:1664px;height:21px;background:#0e0e0e"></div>
<div style="left:1672px;top:1506px;width:1636px;height:16px;background:#5c5c5c"></div>
<svg style="left:1659px;top:1505px;" width="12" height="18" viewBox="0 0 12 18"><path d="M12 0 V18 H9 A9 9 0 0 1 9 0Z" fill="#2d7fe6"/></svg>
<svg style="left:1308px;top:1505px;" width="14" height="18" viewBox="0 0 14 18"></svg>
<svg style="left:3308px;top:1505px;" width="14" height="18" viewBox="0 0 14 18"><path d="M0 0 V18 H5 A9 9 0 0 0 5 0Z" fill="#2d7fe6"/></svg>
<div style="left:2204px;top:1506px;width:2px;height:16px;background:#4f8fd8"></div>
<div style="left:1658px;top:1518px;width:1664px;height:44px;overflow:hidden">
<div style="left:13px;top:33px;width:2px;height:11px;background:#9a9a9a"></div>
<div class="t" style="left:-16px;top:0;font-size:24px;color:#a8a8a8;transform:scaleX(1.1410);transform-origin:0 50%">0:00s</div>
<div style="left:122px;top:33px;width:2px;height:11px;background:#9a9a9a"></div>
<div class="t" style="left:102px;top:0;font-size:24px;color:#a8a8a8;transform:scaleX(1.0335);transform-origin:0 50%">02s</div>
<div style="left:231px;top:33px;width:2px;height:11px;background:#9a9a9a"></div>
<div class="t" style="left:211px;top:0;font-size:24px;color:#a8a8a8;transform:scaleX(1.0335);transform-origin:0 50%">04s</div>
<div style="left:341px;top:33px;width:2px;height:11px;background:#9a9a9a"></div>
<div class="t" style="left:321px;top:0;font-size:24px;color:#a8a8a8;transform:scaleX(1.0335);transform-origin:0 50%">06s</div>
<div style="left:450px;top:33px;width:2px;height:11px;background:#9a9a9a"></div>
<div class="t" style="left:430px;top:0;font-size:24px;color:#a8a8a8;transform:scaleX(1.0335);transform-origin:0 50%">08s</div>
<div style="left:559px;top:33px;width:2px;height:11px;background:#9a9a9a"></div>
<div class="t" style="left:539px;top:0;font-size:24px;color:#a8a8a8;transform:scaleX(1.0335);transform-origin:0 50%">10s</div>
<div style="left:668px;top:33px;width:2px;height:11px;background:#9a9a9a"></div>
<div class="t" style="left:648px;top:0;font-size:24px;color:#a8a8a8;transform:scaleX(1.0335);transform-origin:0 50%">12s</div>
<div style="left:777px;top:33px;width:2px;height:11px;background:#9a9a9a"></div>
<div class="t" style="left:757px;top:0;font-size:24px;color:#a8a8a8;transform:scaleX(1.0335);transform-origin:0 50%">14s</div>
<div style="left:887px;top:33px;width:2px;height:11px;background:#9a9a9a"></div>
<div class="t" style="left:867px;top:0;font-size:24px;color:#a8a8a8;transform:scaleX(1.0335);transform-origin:0 50%">16s</div>
<div style="left:996px;top:33px;width:2px;height:11px;background:#9a9a9a"></div>
<div class="t" style="left:976px;top:0;font-size:24px;color:#a8a8a8;transform:scaleX(1.0335);transform-origin:0 50%">18s</div>
<div style="left:1105px;top:33px;width:2px;height:11px;background:#9a9a9a"></div>
<div class="t" style="left:1085px;top:0;font-size:24px;color:#a8a8a8;transform:scaleX(1.0335);transform-origin:0 50%">20s</div>
<div style="left:1214px;top:33px;width:2px;height:11px;background:#9a9a9a"></div>
<div class="t" style="left:1194px;top:0;font-size:24px;color:#a8a8a8;transform:scaleX(1.0335);transform-origin:0 50%">22s</div>
<div style="left:1323px;top:33px;width:2px;height:11px;background:#9a9a9a"></div>
<div class="t" style="left:1303px;top:0;font-size:24px;color:#a8a8a8;transform:scaleX(1.0335);transform-origin:0 50%">24s</div>
<div style="left:1433px;top:33px;width:2px;height:11px;background:#9a9a9a"></div>
<div class="t" style="left:1413px;top:0;font-size:24px;color:#a8a8a8;transform:scaleX(1.0335);transform-origin:0 50%">26s</div>
<div style="left:1542px;top:33px;width:2px;height:11px;background:#9a9a9a"></div>
<div class="t" style="left:1522px;top:0;font-size:24px;color:#a8a8a8;transform:scaleX(1.0335);transform-origin:0 50%">28s</div>
<div style="left:1651px;top:33px;width:2px;height:11px;background:#9a9a9a"></div>
<div class="t" style="left:1631px;top:0;font-size:24px;color:#a8a8a8;transform:scaleX(1.0335);transform-origin:0 50%">30s</div>
</div>
<div style="left:1658px;top:1562px;width:1664px;height:40px;background:#0e0e0e"></div>
<div style="left:1672px;top:1564px;width:1636px;height:31px;background:#5a5a5a"></div>
<div style="left:1672px;top:1595px;width:1636px;height:6px;background:#19b02a"></div>
<svg style="left:1659px;top:1564px;" width="12" height="31" viewBox="0 0 12 31"><path d="M12 0 V31 H7 A7 7 0 0 1 0 24 V7 A7 7 0 0 1 7 0Z" fill="#2d7fe6"/></svg>
<svg style="left:3308px;top:1564px;" width="14" height="31" viewBox="0 0 14 31"><path d="M0 0 V31 H7 A7 7 0 0 0 14 24 V7 A7 7 0 0 0 7 0Z" fill="#2d7fe6"/></svg>
<div style="left:3322px;top:1562px;width:35px;height:501px;background:#232323"></div>
<svg style="left:3330px;top:1568px;" width="24" height="30" viewBox="0 0 24 30"><path d="M0 0 H24 V18 L12 30 L0 18Z" fill="#aaaaaa"/></svg>
<div style="left:3322px;top:1603px;width:1px;height:460px;background:#101010"></div>
<svg style="left:3324px;top:1610px;" width="30" height="26" viewBox="0 0 30 26"><path d="M16 2 L2 20 H16Z" fill="none" stroke="#aaa" stroke-width="2.4"/><rect x="17" y="6" width="13" height="14" fill="#aaa"/><circle cx="13" cy="19" r="6" fill="#232323" stroke="#aaa" stroke-width="2.4"/></svg>
<div style="left:3326px;top:1645px;width:28px;height:400px;background:#262626;border-radius:14px"></div>
<svg style="left:2197px;top:1648px;" width="16" height="24" viewBox="0 0 16 24"><path d="M1 1 H15 M1 23 H15" stroke="#c4c4c4" stroke-width="2"/><path d="M5 1 V23 M11 1 V23" stroke="#c4c4c4" stroke-width="2"/></svg>
<svg style="left:2197px;top:1686px;" width="16" height="24" viewBox="0 0 16 24"><path d="M1 1 H15 M1 23 H15" stroke="#c4c4c4" stroke-width="2"/><path d="M5 1 V23 M11 1 V23" stroke="#c4c4c4" stroke-width="2"/></svg>
<svg style="left:2197px;top:1724px;" width="16" height="24" viewBox="0 0 16 24"><path d="M1 1 H15 M1 23 H15" stroke="#c4c4c4" stroke-width="2"/><path d="M5 1 V23 M11 1 V23" stroke="#c4c4c4" stroke-width="2"/></svg>
<svg style="left:2197px;top:1953px;" width="16" height="24" viewBox="0 0 16 24"><path d="M1 1 H15 M1 23 H15" stroke="#c4c4c4" stroke-width="2"/><path d="M5 1 V23 M11 1 V23" stroke="#c4c4c4" stroke-width="2"/></svg>
<svg style="left:2197px;top:1991px;" width="16" height="24" viewBox="0 0 16 24"><path d="M1 1 H15 M1 23 H15" stroke="#c4c4c4" stroke-width="2"/><path d="M5 1 V23 M11 1 V23" stroke="#c4c4c4" stroke-width="2"/></svg>
<svg style="left:2197px;top:2029px;" width="16" height="24" viewBox="0 0 16 24"><path d="M1 1 H15 M1 23 H15" stroke="#c4c4c4" stroke-width="2"/><path d="M5 1 V23 M11 1 V23" stroke="#c4c4c4" stroke-width="2"/></svg>
<div style="left:1658px;top:1640px;width:1664px;height:2px;background:#1b1b1b"></div>
<div style="left:1658px;top:1678px;width:1664px;height:2px;background:#1b1b1b"></div>
<div style="left:1658px;top:1716px;width:1664px;height:2px;background:#1b1b1b"></div>
<div style="left:1658px;top:1754px;width:1664px;height:2px;background:#1b1b1b"></div>
<div style="left:1658px;top:1792px;width:1664px;height:2px;background:#1b1b1b"></div>
<div style="left:1658px;top:1830px;width:1664px;height:2px;background:#1b1b1b"></div>
<div style="left:1658px;top:1869px;width:1664px;height:2px;background:#1b1b1b"></div>
<div style="left:1658px;top:1907px;width:1664px;height:2px;background:#1b1b1b"></div>
<div style="left:1658px;top:1945px;width:1664px;height:2px;background:#1b1b1b"></div>
<div style="left:1658px;top:1983px;width:1664px;height:2px;background:#1b1b1b"></div>
<div style="left:1658px;top:2021px;width:1664px;height:2px;background:#1b1b1b"></div>
<div style="left:1658px;top:2059px;width:1664px;height:2px;background:#1b1b1b"></div>
<div style="left:2204px;top:1506px;width:3px;height:557px;background:#3d8ee6"></div>
<svg style="left:2194px;top:1534px;" width="22" height="27" viewBox="0 0 22 27"><path d="M0 0 H22 V10 L11 26 L0 10Z" fill="#3d8ee6"/><path d="M8 13 H14 M11 13 V24" stroke="#1a3f70" stroke-width="1.6"/></svg>
<div style="left:2px;top:2061px;width:3355px;height:2px;background:#0c0c0c"></div>
<div style="left:2px;top:2063px;width:3355px;height:34px;background:#232323"></div>
<svg style="left:10px;top:2068px;" width="28" height="26" viewBox="0 0 28 26"><rect x="1" y="1" width="17" height="17" fill="none" stroke="#3d8ee6" stroke-width="2.4"/><rect x="6" y="6" width="17" height="17" fill="#232323" stroke="#3d8ee6" stroke-width="2.4"/><rect x="11" y="11" width="12" height="12" fill="none" stroke="#3d8ee6" stroke-width="2.4"/><rect x="13" y="14" width="5" height="5" fill="#3d8ee6"/></svg>
<div style="left:44px;top:2065px;width:1px;height:30px;background:#181818"></div>
<svg style="left:50px;top:2066px;" width="26" height="26" viewBox="0 0 26 26"><circle cx="9" cy="9" r="8" fill="none" stroke="#3d8ee6" stroke-width="2.4"/><rect x="9" y="10" width="15" height="14" fill="#232323" stroke="#3d8ee6" stroke-width="2.4"/></svg>
<div style="left:80px;top:2065px;width:1px;height:30px;background:#181818"></div>
<svg style="left:87px;top:2068px;" width="24" height="24" viewBox="0 0 24 24"><path d="M8 0 L1 6 V18 L8 24 Z M16 0 L23 6 V18 L16 24Z" fill="#8a8a8a"/><rect x="10" y="3" width="4" height="18" fill="#8a8a8a"/></svg>
<svg style="left:1668px;top:2068px;" width="24" height="14" viewBox="0 0 24 14"><path d="M2 12 L12 3 L22 12Z" fill="#a8a8a8"/></svg>
<div style="left:1705px;top:2076px;width:100px;height:3px;background:#555"></div>
<svg style="left:1707px;top:2068px;" width="20" height="20" viewBox="0 0 20 20"><circle cx="10" cy="10" r="8" fill="#232323" stroke="#a8a8a8" stroke-width="2.4"/></svg>
<svg style="left:1830px;top:2066px;" width="34" height="18" viewBox="0 0 34 18"><path d="M2 16 L10 5 L14 10 L20 2 L32 16Z" fill="#a8a8a8"/></svg>
<svg style="left:0;top:0" width="3360" height="2100" viewBox="0 0 3360 2100">
<rect x="403" y="75" width="77" height="56" fill="none" stroke="#fa2c0a" stroke-width="10"/>
<path d="M485 105 C764 189 1265 392 1405 651" fill="none" stroke="#fa2c0a" stroke-width="11"/>
<path d="M1431 688 L1384 666 L1418 638Z" fill="#fa2c0a"/>
</svg>
<svg style="left:2632px;top:6px;" width="32" height="32" viewBox="0 0 32 32"><circle cx="16" cy="16" r="16" fill="#0a0a14"/><rect x="10" y="10.5" width="12" height="11.5" rx="2" fill="#a8aac2"/></svg>
<svg style="left:2688px;top:5px;" width="42" height="34" viewBox="0 0 42 34"><path d="M2 30 L12 16 C13 14 15 13 17 13 L31 13 C34 13 35 15 34 17 L26 31 C25 33 23 34 21 34 L4 34 C2 34 1 32 2 30Z" fill="#0a0a14"/><path d="M22 13 L28 5" stroke="#0a0a14" stroke-width="2"/><path d="M24 4 L34 0 L38 6 L31 12Z" fill="#0a0a14"/></svg>
<svg style="left:2755px;top:6px;" width="24" height="32" viewBox="0 0 24 32"><path d="M7 6 L16 14 L11 19 L16 24 L7 32 V0 L16 8 L3 21" fill="none" stroke="#565866" stroke-width="1.6"/><circle cx="3" cy="17" r="2.6" fill="#0a0a14"/><circle cx="11" cy="17" r="2.6" fill="#0a0a14"/><circle cx="19" cy="17" r="2.6" fill="#0a0a14"/></svg>
<svg style="left:2805px;top:6px;" width="44" height="31" viewBox="0 0 44 31"><path d="M2 11 A30 30 0 0 1 42 11" fill="none" stroke="#0a0a14" stroke-width="3.2"/><path d="M9 18 A20 20 0 0 1 35 18" fill="none" stroke="#0a0a14" stroke-width="3.2"/><path d="M16 24.5 A10 10 0 0 1 28 24.5" fill="none" stroke="#0a0a14" stroke-width="3.2"/><path d="M18 29 L22 25 L26 29 L22 31Z" fill="#0a0a14"/></svg>
<svg style="left:2872px;top:11px;" width="32" height="22" viewBox="0 0 32 22"><rect width="32" height="22" fill="#fff"/><rect x="0" y="0.00" width="32" height="1.6" fill="#b22234"/><rect x="0" y="3.14" width="32" height="1.6" fill="#b22234"/><rect x="0" y="6.29" width="32" height="1.6" fill="#b22234"/><rect x="0" y="9.43" width="32" height="1.6" fill="#b22234"/><rect x="0" y="12.57" width="32" height="1.6" fill="#b22234"/><rect x="0" y="15.71" width="32" height="1.6" fill="#b22234"/><rect x="0" y="18.86" width="32" height="1.6" fill="#b22234"/><rect width="14" height="12" fill="#3c3b6e"/><path d="M2 2h1v1h-1zM5 2h1v1h-1zM8 2h1v1h-1zM11 2h1v1h-1zM3.5 4h1v1h-1zM6.5 4h1v1h-1zM9.5 4h1v1h-1zM2 6h1v1h-1zM5 6h1v1h-1zM8 6h1v1h-1zM11 6h1v1h-1zM3.5 8h1v1h-1zM6.5 8h1v1h-1zM9.5 8h1v1h-1zM2 10h1v1h-1zM5 10h1v1h-1zM8 10h1v1h-1z" fill="#fff"/></svg>
<svg style="left:2934px;top:8px;" width="64" height="28" viewBox="0 0 64 28"><rect x="1" y="1" width="55" height="26" rx="4" fill="none" stroke="#0a0a14" stroke-width="2.2"/><path d="M59 10 A4 4 0 0 1 59 18Z" fill="#0a0a14"/></svg>
<div class="mb" style="left:2941px;font-size:23px;color:#0a0a14;transform:scaleX(0.8904);transform-origin:0 50%">80%</div>
<svg style="left:3219px;top:8px;" width="28" height="29" viewBox="0 0 28 29"><circle cx="11" cy="11" r="9" fill="none" stroke="#0a0a14" stroke-width="2.8"/><path d="M17.5 17.5 L27 27" stroke="#0a0a14" stroke-width="3" stroke-linecap="round"/></svg>
<svg style="left:3277px;top:12px;" width="37" height="20" viewBox="0 0 37 20"><rect x="0" y="0" width="4" height="3.2" fill="#0a0a14"/><rect x="8" y="0" width="29" height="3.2" fill="#0a0a14"/><rect x="0" y="8.4" width="4" height="3.2" fill="#0a0a14"/><rect x="8" y="8.4" width="29" height="3.2" fill="#0a0a14"/><rect x="0" y="16.8" width="4" height="3.2" fill="#0a0a14"/><rect x="8" y="16.8" width="29" height="3.2" fill="#0a0a14"/></svg>
<svg style="left:420px;top:1678px" width="40" height="50" viewBox="-7 -6 40 50"><path d="M0 0 V31.6 L6.7 25.7 L11.1 36 L17.8 33.2 L13.9 23.7 L22.8 22.5Z" fill="#000" stroke="#fff" stroke-width="2.2" stroke-linejoin="miter"/></svg></body></html>
